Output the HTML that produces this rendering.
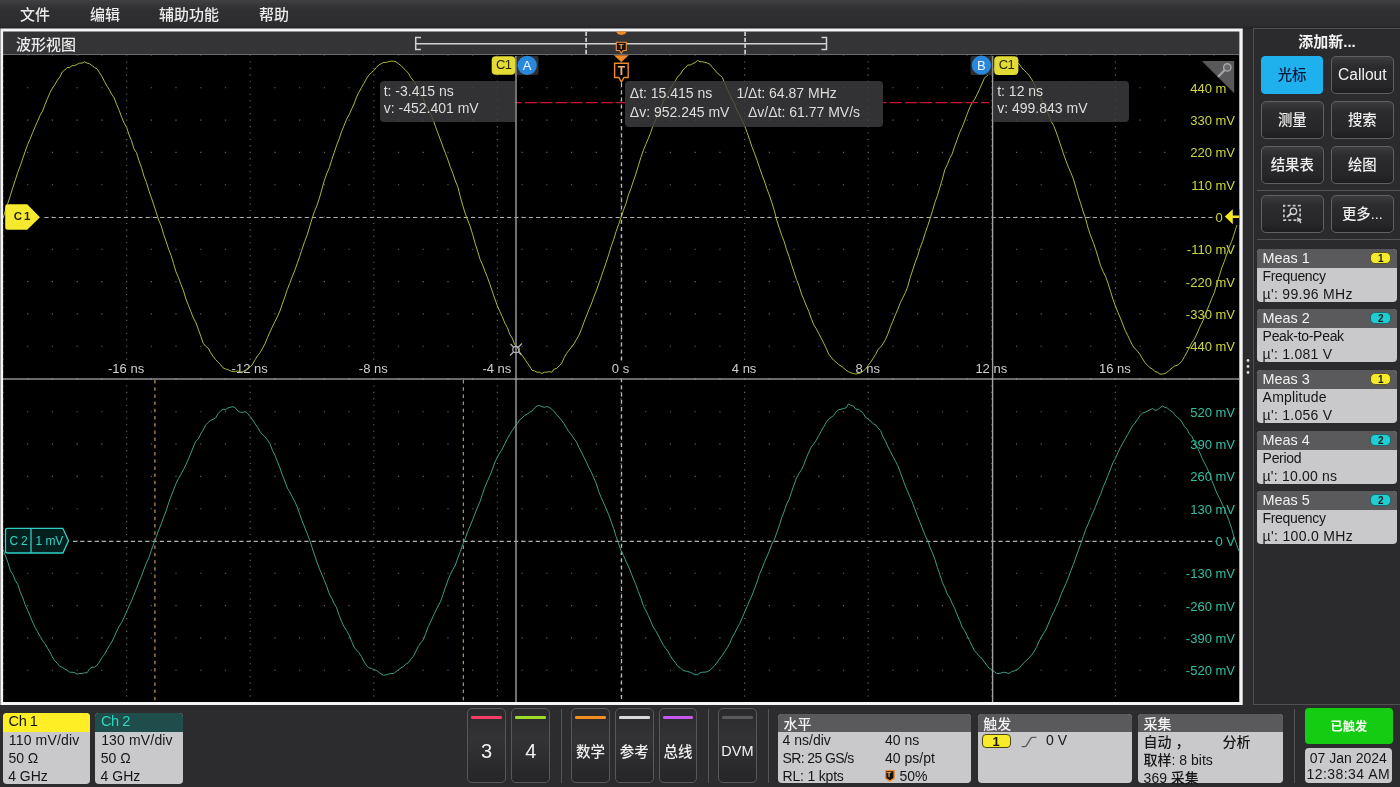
<!DOCTYPE html>
<html lang="zh-CN"><head><meta charset="utf-8"><title>波形视图</title>
<style>
*{box-sizing:border-box;margin:0;padding:0}
html,body{width:1400px;height:787px;overflow:hidden;background:#2c2c2e}
#root{position:absolute;left:0;top:0;width:1400px;height:787px;overflow:hidden;will-change:transform;transform:translateZ(0)}
body{position:relative;font-family:"Liberation Sans","Noto Sans CJK SC",sans-serif;color:#e6e6e6;font-size:14px;line-height:1;font-weight:500}
.abs{position:absolute}
.t{position:absolute;white-space:pre;line-height:1}
#menubar{position:absolute;left:0;top:0;width:1400px;height:29px;background:linear-gradient(#414143 0%,#363638 18%,#2f2f31 36%,#2d2d2f 88%,#202022 100%)}
#menubar span{position:absolute;top:7px;font-size:15px;color:#ececec;white-space:pre}
#frame{position:absolute;left:1px;top:29px;width:1241px;height:675px;background:#000}
#titlebar{position:absolute;left:3px;top:31px;width:1236px;height:24px;background:#343436;border-bottom:1px solid #6a6a6c}
#gsvg{position:absolute;left:0;top:0}
#rpanel{position:absolute;left:1253px;top:28px;width:150px;height:677px;border:1px solid #505052;background:#2b2b2d}
.btn{position:absolute;width:62.6px;height:38px;border:1px solid #606062;border-radius:5px;background:linear-gradient(#3c3c3e,#2c2c2e 25%,#262628 80%,#1e1e20);color:#f0f0f0;font-size:14.4px;text-align:center;line-height:36px;white-space:pre}
.btn.on{background:#1fb0ee;border-color:#1fb0ee;color:#081838;border-radius:4px;width:62.2px}
.hsep{position:absolute;height:1px;background:#555557}
.vsep{position:absolute;width:1px;background:#555557}
.badge{position:absolute;border-radius:4px;background:#c9c9cb;overflow:hidden;color:#1a1a1a;font-size:14px}
.badge .hd{position:absolute;left:0;top:0;right:0;background:#5a5a5c;color:#f0f0f0}
.badge .t{color:#161616}
.badge .hd .t{color:#f2f2f2}
.bbtn{position:absolute;top:708px;width:38.6px;height:75.4px;border:1px solid #58585a;border-radius:5px;background:linear-gradient(#2a2a2c,#333335 40%,#262628);color:#f0f0f0;text-align:center}
.bbtn i{position:absolute;left:3px;right:3px;top:7px;height:3px;border-radius:1.2px}
.bbtn span{position:absolute;left:0;right:0;top:33px;font-size:15px;white-space:pre}
.ro{position:absolute;background:rgba(62,61,64,.8);color:#dcdcdc;font-size:14px}
.ro .t{color:#dedede}
.ylab{position:absolute;right:165px;font-size:13px;white-space:pre;text-align:right}
.xlab{position:absolute;font-size:13px;color:#cfcfcf;white-space:pre;top:362px}
.xlab span{background:#000;padding:0 1px}
</style></head><body><div id="root">
<div id="menubar"><span style="left:20px">文件</span><span style="left:90px">编辑</span><span style="left:159px">辅助功能</span><span style="left:259px">帮助</span></div>
<div id="frame"></div><div id="titlebar"></div>
<div class="t" style="left:16px;top:37px;font-size:15px;color:#ececec">波形视图</div>
<svg id="gsvg" width="1400" height="787" viewBox="0 0 1400 787"><path d="M.4 28.4H1242.7V705.1H.4zM3.1 31.5V702.1H1239.3V31.5z" fill="#f4f4f4" fill-rule="evenodd"/><defs><clipPath id="cg"><rect x="3" y="55.5" width="1236" height="646.5"/></clipPath><clipPath id="cred"><rect x="514.5" y="100" width="110.6" height="6"/><rect x="883.2" y="100" width="107" height="6"/></clipPath><clipPath id="c1"><rect x="3" y="55.5" width="1236" height="323"/></clipPath><clipPath id="c2"><rect x="3" y="379" width="1236" height="323"/></clipPath></defs><path d="M2.4 55.5h1.2M27.1 55.5h1.2M51.8 55.5h1.2M76.6 55.5h1.2M101.3 55.5h1.2M126.0 55.5h1.2M150.7 55.5h1.2M175.4 55.5h1.2M200.2 55.5h1.2M224.9 55.5h1.2M249.6 55.5h1.2M274.3 55.5h1.2M299.0 55.5h1.2M323.8 55.5h1.2M348.5 55.5h1.2M373.2 55.5h1.2M397.9 55.5h1.2M422.6 55.5h1.2M447.4 55.5h1.2M472.1 55.5h1.2M496.8 55.5h1.2M521.5 55.5h1.2M546.2 55.5h1.2M571.0 55.5h1.2M595.7 55.5h1.2M620.4 55.5h1.2M645.1 55.5h1.2M669.8 55.5h1.2M694.6 55.5h1.2M719.3 55.5h1.2M744.0 55.5h1.2M768.7 55.5h1.2M793.4 55.5h1.2M818.2 55.5h1.2M842.9 55.5h1.2M867.6 55.5h1.2M892.3 55.5h1.2M917.0 55.5h1.2M941.8 55.5h1.2M966.5 55.5h1.2M991.2 55.5h1.2M1015.9 55.5h1.2M1040.6 55.5h1.2M1065.4 55.5h1.2M1090.1 55.5h1.2M1114.8 55.5h1.2M1139.5 55.5h1.2M1164.2 55.5h1.2M1189.0 55.5h1.2M1213.7 55.5h1.2M1238.4 55.5h1.2M2.4 87.8h1.2M27.1 87.8h1.2M51.8 87.8h1.2M76.6 87.8h1.2M101.3 87.8h1.2M126.0 87.8h1.2M150.7 87.8h1.2M175.4 87.8h1.2M200.2 87.8h1.2M224.9 87.8h1.2M249.6 87.8h1.2M274.3 87.8h1.2M299.0 87.8h1.2M323.8 87.8h1.2M348.5 87.8h1.2M373.2 87.8h1.2M397.9 87.8h1.2M422.6 87.8h1.2M447.4 87.8h1.2M472.1 87.8h1.2M496.8 87.8h1.2M521.5 87.8h1.2M546.2 87.8h1.2M571.0 87.8h1.2M595.7 87.8h1.2M620.4 87.8h1.2M645.1 87.8h1.2M669.8 87.8h1.2M694.6 87.8h1.2M719.3 87.8h1.2M744.0 87.8h1.2M768.7 87.8h1.2M793.4 87.8h1.2M818.2 87.8h1.2M842.9 87.8h1.2M867.6 87.8h1.2M892.3 87.8h1.2M917.0 87.8h1.2M941.8 87.8h1.2M966.5 87.8h1.2M991.2 87.8h1.2M1015.9 87.8h1.2M1040.6 87.8h1.2M1065.4 87.8h1.2M1090.1 87.8h1.2M1114.8 87.8h1.2M1139.5 87.8h1.2M1164.2 87.8h1.2M2.4 120.1h1.2M27.1 120.1h1.2M51.8 120.1h1.2M76.6 120.1h1.2M101.3 120.1h1.2M126.0 120.1h1.2M150.7 120.1h1.2M175.4 120.1h1.2M200.2 120.1h1.2M224.9 120.1h1.2M249.6 120.1h1.2M274.3 120.1h1.2M299.0 120.1h1.2M323.8 120.1h1.2M348.5 120.1h1.2M373.2 120.1h1.2M397.9 120.1h1.2M422.6 120.1h1.2M447.4 120.1h1.2M472.1 120.1h1.2M496.8 120.1h1.2M521.5 120.1h1.2M546.2 120.1h1.2M571.0 120.1h1.2M595.7 120.1h1.2M620.4 120.1h1.2M645.1 120.1h1.2M669.8 120.1h1.2M694.6 120.1h1.2M719.3 120.1h1.2M744.0 120.1h1.2M768.7 120.1h1.2M793.4 120.1h1.2M818.2 120.1h1.2M842.9 120.1h1.2M867.6 120.1h1.2M892.3 120.1h1.2M917.0 120.1h1.2M941.8 120.1h1.2M966.5 120.1h1.2M991.2 120.1h1.2M1015.9 120.1h1.2M1040.6 120.1h1.2M1065.4 120.1h1.2M1090.1 120.1h1.2M1114.8 120.1h1.2M1139.5 120.1h1.2M1164.2 120.1h1.2M2.4 152.4h1.2M27.1 152.4h1.2M51.8 152.4h1.2M76.6 152.4h1.2M101.3 152.4h1.2M126.0 152.4h1.2M150.7 152.4h1.2M175.4 152.4h1.2M200.2 152.4h1.2M224.9 152.4h1.2M249.6 152.4h1.2M274.3 152.4h1.2M299.0 152.4h1.2M323.8 152.4h1.2M348.5 152.4h1.2M373.2 152.4h1.2M397.9 152.4h1.2M422.6 152.4h1.2M447.4 152.4h1.2M472.1 152.4h1.2M496.8 152.4h1.2M521.5 152.4h1.2M546.2 152.4h1.2M571.0 152.4h1.2M595.7 152.4h1.2M620.4 152.4h1.2M645.1 152.4h1.2M669.8 152.4h1.2M694.6 152.4h1.2M719.3 152.4h1.2M744.0 152.4h1.2M768.7 152.4h1.2M793.4 152.4h1.2M818.2 152.4h1.2M842.9 152.4h1.2M867.6 152.4h1.2M892.3 152.4h1.2M917.0 152.4h1.2M941.8 152.4h1.2M966.5 152.4h1.2M991.2 152.4h1.2M1015.9 152.4h1.2M1040.6 152.4h1.2M1065.4 152.4h1.2M1090.1 152.4h1.2M1114.8 152.4h1.2M1139.5 152.4h1.2M1164.2 152.4h1.2M2.4 184.7h1.2M27.1 184.7h1.2M51.8 184.7h1.2M76.6 184.7h1.2M101.3 184.7h1.2M126.0 184.7h1.2M150.7 184.7h1.2M175.4 184.7h1.2M200.2 184.7h1.2M224.9 184.7h1.2M249.6 184.7h1.2M274.3 184.7h1.2M299.0 184.7h1.2M323.8 184.7h1.2M348.5 184.7h1.2M373.2 184.7h1.2M397.9 184.7h1.2M422.6 184.7h1.2M447.4 184.7h1.2M472.1 184.7h1.2M496.8 184.7h1.2M521.5 184.7h1.2M546.2 184.7h1.2M571.0 184.7h1.2M595.7 184.7h1.2M620.4 184.7h1.2M645.1 184.7h1.2M669.8 184.7h1.2M694.6 184.7h1.2M719.3 184.7h1.2M744.0 184.7h1.2M768.7 184.7h1.2M793.4 184.7h1.2M818.2 184.7h1.2M842.9 184.7h1.2M867.6 184.7h1.2M892.3 184.7h1.2M917.0 184.7h1.2M941.8 184.7h1.2M966.5 184.7h1.2M991.2 184.7h1.2M1015.9 184.7h1.2M1040.6 184.7h1.2M1065.4 184.7h1.2M1090.1 184.7h1.2M1114.8 184.7h1.2M1139.5 184.7h1.2M1164.2 184.7h1.2M2.4 217.0h1.2M27.1 217.0h1.2M51.8 217.0h1.2M76.6 217.0h1.2M101.3 217.0h1.2M126.0 217.0h1.2M150.7 217.0h1.2M175.4 217.0h1.2M200.2 217.0h1.2M224.9 217.0h1.2M249.6 217.0h1.2M274.3 217.0h1.2M299.0 217.0h1.2M323.8 217.0h1.2M348.5 217.0h1.2M373.2 217.0h1.2M397.9 217.0h1.2M422.6 217.0h1.2M447.4 217.0h1.2M472.1 217.0h1.2M496.8 217.0h1.2M521.5 217.0h1.2M546.2 217.0h1.2M571.0 217.0h1.2M595.7 217.0h1.2M620.4 217.0h1.2M645.1 217.0h1.2M669.8 217.0h1.2M694.6 217.0h1.2M719.3 217.0h1.2M744.0 217.0h1.2M768.7 217.0h1.2M793.4 217.0h1.2M818.2 217.0h1.2M842.9 217.0h1.2M867.6 217.0h1.2M892.3 217.0h1.2M917.0 217.0h1.2M941.8 217.0h1.2M966.5 217.0h1.2M991.2 217.0h1.2M1015.9 217.0h1.2M1040.6 217.0h1.2M1065.4 217.0h1.2M1090.1 217.0h1.2M1114.8 217.0h1.2M1139.5 217.0h1.2M1164.2 217.0h1.2M2.4 249.3h1.2M27.1 249.3h1.2M51.8 249.3h1.2M76.6 249.3h1.2M101.3 249.3h1.2M126.0 249.3h1.2M150.7 249.3h1.2M175.4 249.3h1.2M200.2 249.3h1.2M224.9 249.3h1.2M249.6 249.3h1.2M274.3 249.3h1.2M299.0 249.3h1.2M323.8 249.3h1.2M348.5 249.3h1.2M373.2 249.3h1.2M397.9 249.3h1.2M422.6 249.3h1.2M447.4 249.3h1.2M472.1 249.3h1.2M496.8 249.3h1.2M521.5 249.3h1.2M546.2 249.3h1.2M571.0 249.3h1.2M595.7 249.3h1.2M620.4 249.3h1.2M645.1 249.3h1.2M669.8 249.3h1.2M694.6 249.3h1.2M719.3 249.3h1.2M744.0 249.3h1.2M768.7 249.3h1.2M793.4 249.3h1.2M818.2 249.3h1.2M842.9 249.3h1.2M867.6 249.3h1.2M892.3 249.3h1.2M917.0 249.3h1.2M941.8 249.3h1.2M966.5 249.3h1.2M991.2 249.3h1.2M1015.9 249.3h1.2M1040.6 249.3h1.2M1065.4 249.3h1.2M1090.1 249.3h1.2M1114.8 249.3h1.2M1139.5 249.3h1.2M1164.2 249.3h1.2M2.4 281.6h1.2M27.1 281.6h1.2M51.8 281.6h1.2M76.6 281.6h1.2M101.3 281.6h1.2M126.0 281.6h1.2M150.7 281.6h1.2M175.4 281.6h1.2M200.2 281.6h1.2M224.9 281.6h1.2M249.6 281.6h1.2M274.3 281.6h1.2M299.0 281.6h1.2M323.8 281.6h1.2M348.5 281.6h1.2M373.2 281.6h1.2M397.9 281.6h1.2M422.6 281.6h1.2M447.4 281.6h1.2M472.1 281.6h1.2M496.8 281.6h1.2M521.5 281.6h1.2M546.2 281.6h1.2M571.0 281.6h1.2M595.7 281.6h1.2M620.4 281.6h1.2M645.1 281.6h1.2M669.8 281.6h1.2M694.6 281.6h1.2M719.3 281.6h1.2M744.0 281.6h1.2M768.7 281.6h1.2M793.4 281.6h1.2M818.2 281.6h1.2M842.9 281.6h1.2M867.6 281.6h1.2M892.3 281.6h1.2M917.0 281.6h1.2M941.8 281.6h1.2M966.5 281.6h1.2M991.2 281.6h1.2M1015.9 281.6h1.2M1040.6 281.6h1.2M1065.4 281.6h1.2M1090.1 281.6h1.2M1114.8 281.6h1.2M1139.5 281.6h1.2M1164.2 281.6h1.2M2.4 313.9h1.2M27.1 313.9h1.2M51.8 313.9h1.2M76.6 313.9h1.2M101.3 313.9h1.2M126.0 313.9h1.2M150.7 313.9h1.2M175.4 313.9h1.2M200.2 313.9h1.2M224.9 313.9h1.2M249.6 313.9h1.2M274.3 313.9h1.2M299.0 313.9h1.2M323.8 313.9h1.2M348.5 313.9h1.2M373.2 313.9h1.2M397.9 313.9h1.2M422.6 313.9h1.2M447.4 313.9h1.2M472.1 313.9h1.2M496.8 313.9h1.2M521.5 313.9h1.2M546.2 313.9h1.2M571.0 313.9h1.2M595.7 313.9h1.2M620.4 313.9h1.2M645.1 313.9h1.2M669.8 313.9h1.2M694.6 313.9h1.2M719.3 313.9h1.2M744.0 313.9h1.2M768.7 313.9h1.2M793.4 313.9h1.2M818.2 313.9h1.2M842.9 313.9h1.2M867.6 313.9h1.2M892.3 313.9h1.2M917.0 313.9h1.2M941.8 313.9h1.2M966.5 313.9h1.2M991.2 313.9h1.2M1015.9 313.9h1.2M1040.6 313.9h1.2M1065.4 313.9h1.2M1090.1 313.9h1.2M1114.8 313.9h1.2M1139.5 313.9h1.2M1164.2 313.9h1.2M2.4 346.2h1.2M27.1 346.2h1.2M51.8 346.2h1.2M76.6 346.2h1.2M101.3 346.2h1.2M126.0 346.2h1.2M150.7 346.2h1.2M175.4 346.2h1.2M200.2 346.2h1.2M224.9 346.2h1.2M249.6 346.2h1.2M274.3 346.2h1.2M299.0 346.2h1.2M323.8 346.2h1.2M348.5 346.2h1.2M373.2 346.2h1.2M397.9 346.2h1.2M422.6 346.2h1.2M447.4 346.2h1.2M472.1 346.2h1.2M496.8 346.2h1.2M521.5 346.2h1.2M546.2 346.2h1.2M571.0 346.2h1.2M595.7 346.2h1.2M620.4 346.2h1.2M645.1 346.2h1.2M669.8 346.2h1.2M694.6 346.2h1.2M719.3 346.2h1.2M744.0 346.2h1.2M768.7 346.2h1.2M793.4 346.2h1.2M818.2 346.2h1.2M842.9 346.2h1.2M867.6 346.2h1.2M892.3 346.2h1.2M917.0 346.2h1.2M941.8 346.2h1.2M966.5 346.2h1.2M991.2 346.2h1.2M1015.9 346.2h1.2M1040.6 346.2h1.2M1065.4 346.2h1.2M1090.1 346.2h1.2M1114.8 346.2h1.2M1139.5 346.2h1.2M1164.2 346.2h1.2M2.4 378.5h1.2M27.1 378.5h1.2M51.8 378.5h1.2M76.6 378.5h1.2M101.3 378.5h1.2M126.0 378.5h1.2M150.7 378.5h1.2M175.4 378.5h1.2M200.2 378.5h1.2M224.9 378.5h1.2M249.6 378.5h1.2M274.3 378.5h1.2M299.0 378.5h1.2M323.8 378.5h1.2M348.5 378.5h1.2M373.2 378.5h1.2M397.9 378.5h1.2M422.6 378.5h1.2M447.4 378.5h1.2M472.1 378.5h1.2M496.8 378.5h1.2M521.5 378.5h1.2M546.2 378.5h1.2M571.0 378.5h1.2M595.7 378.5h1.2M620.4 378.5h1.2M645.1 378.5h1.2M669.8 378.5h1.2M694.6 378.5h1.2M719.3 378.5h1.2M744.0 378.5h1.2M768.7 378.5h1.2M793.4 378.5h1.2M818.2 378.5h1.2M842.9 378.5h1.2M867.6 378.5h1.2M892.3 378.5h1.2M917.0 378.5h1.2M941.8 378.5h1.2M966.5 378.5h1.2M991.2 378.5h1.2M1015.9 378.5h1.2M1040.6 378.5h1.2M1065.4 378.5h1.2M1090.1 378.5h1.2M1114.8 378.5h1.2M1139.5 378.5h1.2M1164.2 378.5h1.2M1189.0 378.5h1.2M1213.7 378.5h1.2M1238.4 378.5h1.2M2.4 62.0h1.2M2.4 68.4h1.2M2.4 74.9h1.2M2.4 81.3h1.2M2.4 94.3h1.2M2.4 100.7h1.2M2.4 107.2h1.2M2.4 113.6h1.2M2.4 126.6h1.2M2.4 133.0h1.2M2.4 139.5h1.2M2.4 145.9h1.2M2.4 158.9h1.2M2.4 165.3h1.2M2.4 171.8h1.2M2.4 178.2h1.2M2.4 191.2h1.2M2.4 197.6h1.2M2.4 204.1h1.2M2.4 210.5h1.2M2.4 223.5h1.2M2.4 229.9h1.2M2.4 236.4h1.2M2.4 242.8h1.2M2.4 255.8h1.2M2.4 262.2h1.2M2.4 268.7h1.2M2.4 275.1h1.2M2.4 288.1h1.2M2.4 294.5h1.2M2.4 301.0h1.2M2.4 307.4h1.2M2.4 320.4h1.2M2.4 326.8h1.2M2.4 333.3h1.2M2.4 339.7h1.2M2.4 352.7h1.2M2.4 359.1h1.2M2.4 365.6h1.2M2.4 372.0h1.2M126.0 62.0h1.2M126.0 68.4h1.2M126.0 74.9h1.2M126.0 81.3h1.2M126.0 94.3h1.2M126.0 100.7h1.2M126.0 107.2h1.2M126.0 113.6h1.2M126.0 126.6h1.2M126.0 133.0h1.2M126.0 139.5h1.2M126.0 145.9h1.2M126.0 158.9h1.2M126.0 165.3h1.2M126.0 171.8h1.2M126.0 178.2h1.2M126.0 191.2h1.2M126.0 197.6h1.2M126.0 204.1h1.2M126.0 210.5h1.2M126.0 223.5h1.2M126.0 229.9h1.2M126.0 236.4h1.2M126.0 242.8h1.2M126.0 255.8h1.2M126.0 262.2h1.2M126.0 268.7h1.2M126.0 275.1h1.2M126.0 288.1h1.2M126.0 294.5h1.2M126.0 301.0h1.2M126.0 307.4h1.2M126.0 320.4h1.2M126.0 326.8h1.2M126.0 333.3h1.2M126.0 339.7h1.2M126.0 352.7h1.2M126.0 359.1h1.2M126.0 365.6h1.2M126.0 372.0h1.2M249.6 62.0h1.2M249.6 68.4h1.2M249.6 74.9h1.2M249.6 81.3h1.2M249.6 94.3h1.2M249.6 100.7h1.2M249.6 107.2h1.2M249.6 113.6h1.2M249.6 126.6h1.2M249.6 133.0h1.2M249.6 139.5h1.2M249.6 145.9h1.2M249.6 158.9h1.2M249.6 165.3h1.2M249.6 171.8h1.2M249.6 178.2h1.2M249.6 191.2h1.2M249.6 197.6h1.2M249.6 204.1h1.2M249.6 210.5h1.2M249.6 223.5h1.2M249.6 229.9h1.2M249.6 236.4h1.2M249.6 242.8h1.2M249.6 255.8h1.2M249.6 262.2h1.2M249.6 268.7h1.2M249.6 275.1h1.2M249.6 288.1h1.2M249.6 294.5h1.2M249.6 301.0h1.2M249.6 307.4h1.2M249.6 320.4h1.2M249.6 326.8h1.2M249.6 333.3h1.2M249.6 339.7h1.2M249.6 352.7h1.2M249.6 359.1h1.2M249.6 365.6h1.2M249.6 372.0h1.2M373.2 62.0h1.2M373.2 68.4h1.2M373.2 74.9h1.2M373.2 81.3h1.2M373.2 94.3h1.2M373.2 100.7h1.2M373.2 107.2h1.2M373.2 113.6h1.2M373.2 126.6h1.2M373.2 133.0h1.2M373.2 139.5h1.2M373.2 145.9h1.2M373.2 158.9h1.2M373.2 165.3h1.2M373.2 171.8h1.2M373.2 178.2h1.2M373.2 191.2h1.2M373.2 197.6h1.2M373.2 204.1h1.2M373.2 210.5h1.2M373.2 223.5h1.2M373.2 229.9h1.2M373.2 236.4h1.2M373.2 242.8h1.2M373.2 255.8h1.2M373.2 262.2h1.2M373.2 268.7h1.2M373.2 275.1h1.2M373.2 288.1h1.2M373.2 294.5h1.2M373.2 301.0h1.2M373.2 307.4h1.2M373.2 320.4h1.2M373.2 326.8h1.2M373.2 333.3h1.2M373.2 339.7h1.2M373.2 352.7h1.2M373.2 359.1h1.2M373.2 365.6h1.2M373.2 372.0h1.2M496.8 62.0h1.2M496.8 68.4h1.2M496.8 74.9h1.2M496.8 81.3h1.2M496.8 94.3h1.2M496.8 100.7h1.2M496.8 107.2h1.2M496.8 113.6h1.2M496.8 126.6h1.2M496.8 133.0h1.2M496.8 139.5h1.2M496.8 145.9h1.2M496.8 158.9h1.2M496.8 165.3h1.2M496.8 171.8h1.2M496.8 178.2h1.2M496.8 191.2h1.2M496.8 197.6h1.2M496.8 204.1h1.2M496.8 210.5h1.2M496.8 223.5h1.2M496.8 229.9h1.2M496.8 236.4h1.2M496.8 242.8h1.2M496.8 255.8h1.2M496.8 262.2h1.2M496.8 268.7h1.2M496.8 275.1h1.2M496.8 288.1h1.2M496.8 294.5h1.2M496.8 301.0h1.2M496.8 307.4h1.2M496.8 320.4h1.2M496.8 326.8h1.2M496.8 333.3h1.2M496.8 339.7h1.2M496.8 352.7h1.2M496.8 359.1h1.2M496.8 365.6h1.2M496.8 372.0h1.2M620.4 62.0h1.2M620.4 68.4h1.2M620.4 74.9h1.2M620.4 81.3h1.2M620.4 94.3h1.2M620.4 100.7h1.2M620.4 107.2h1.2M620.4 113.6h1.2M620.4 126.6h1.2M620.4 133.0h1.2M620.4 139.5h1.2M620.4 145.9h1.2M620.4 158.9h1.2M620.4 165.3h1.2M620.4 171.8h1.2M620.4 178.2h1.2M620.4 191.2h1.2M620.4 197.6h1.2M620.4 204.1h1.2M620.4 210.5h1.2M620.4 223.5h1.2M620.4 229.9h1.2M620.4 236.4h1.2M620.4 242.8h1.2M620.4 255.8h1.2M620.4 262.2h1.2M620.4 268.7h1.2M620.4 275.1h1.2M620.4 288.1h1.2M620.4 294.5h1.2M620.4 301.0h1.2M620.4 307.4h1.2M620.4 320.4h1.2M620.4 326.8h1.2M620.4 333.3h1.2M620.4 339.7h1.2M620.4 352.7h1.2M620.4 359.1h1.2M620.4 365.6h1.2M620.4 372.0h1.2M744.0 62.0h1.2M744.0 68.4h1.2M744.0 74.9h1.2M744.0 81.3h1.2M744.0 94.3h1.2M744.0 100.7h1.2M744.0 107.2h1.2M744.0 113.6h1.2M744.0 126.6h1.2M744.0 133.0h1.2M744.0 139.5h1.2M744.0 145.9h1.2M744.0 158.9h1.2M744.0 165.3h1.2M744.0 171.8h1.2M744.0 178.2h1.2M744.0 191.2h1.2M744.0 197.6h1.2M744.0 204.1h1.2M744.0 210.5h1.2M744.0 223.5h1.2M744.0 229.9h1.2M744.0 236.4h1.2M744.0 242.8h1.2M744.0 255.8h1.2M744.0 262.2h1.2M744.0 268.7h1.2M744.0 275.1h1.2M744.0 288.1h1.2M744.0 294.5h1.2M744.0 301.0h1.2M744.0 307.4h1.2M744.0 320.4h1.2M744.0 326.8h1.2M744.0 333.3h1.2M744.0 339.7h1.2M744.0 352.7h1.2M744.0 359.1h1.2M744.0 365.6h1.2M744.0 372.0h1.2M867.6 62.0h1.2M867.6 68.4h1.2M867.6 74.9h1.2M867.6 81.3h1.2M867.6 94.3h1.2M867.6 100.7h1.2M867.6 107.2h1.2M867.6 113.6h1.2M867.6 126.6h1.2M867.6 133.0h1.2M867.6 139.5h1.2M867.6 145.9h1.2M867.6 158.9h1.2M867.6 165.3h1.2M867.6 171.8h1.2M867.6 178.2h1.2M867.6 191.2h1.2M867.6 197.6h1.2M867.6 204.1h1.2M867.6 210.5h1.2M867.6 223.5h1.2M867.6 229.9h1.2M867.6 236.4h1.2M867.6 242.8h1.2M867.6 255.8h1.2M867.6 262.2h1.2M867.6 268.7h1.2M867.6 275.1h1.2M867.6 288.1h1.2M867.6 294.5h1.2M867.6 301.0h1.2M867.6 307.4h1.2M867.6 320.4h1.2M867.6 326.8h1.2M867.6 333.3h1.2M867.6 339.7h1.2M867.6 352.7h1.2M867.6 359.1h1.2M867.6 365.6h1.2M867.6 372.0h1.2M991.2 62.0h1.2M991.2 68.4h1.2M991.2 74.9h1.2M991.2 81.3h1.2M991.2 94.3h1.2M991.2 100.7h1.2M991.2 107.2h1.2M991.2 113.6h1.2M991.2 126.6h1.2M991.2 133.0h1.2M991.2 139.5h1.2M991.2 145.9h1.2M991.2 158.9h1.2M991.2 165.3h1.2M991.2 171.8h1.2M991.2 178.2h1.2M991.2 191.2h1.2M991.2 197.6h1.2M991.2 204.1h1.2M991.2 210.5h1.2M991.2 223.5h1.2M991.2 229.9h1.2M991.2 236.4h1.2M991.2 242.8h1.2M991.2 255.8h1.2M991.2 262.2h1.2M991.2 268.7h1.2M991.2 275.1h1.2M991.2 288.1h1.2M991.2 294.5h1.2M991.2 301.0h1.2M991.2 307.4h1.2M991.2 320.4h1.2M991.2 326.8h1.2M991.2 333.3h1.2M991.2 339.7h1.2M991.2 352.7h1.2M991.2 359.1h1.2M991.2 365.6h1.2M991.2 372.0h1.2M1114.8 62.0h1.2M1114.8 68.4h1.2M1114.8 74.9h1.2M1114.8 81.3h1.2M1114.8 94.3h1.2M1114.8 100.7h1.2M1114.8 107.2h1.2M1114.8 113.6h1.2M1114.8 126.6h1.2M1114.8 133.0h1.2M1114.8 139.5h1.2M1114.8 145.9h1.2M1114.8 158.9h1.2M1114.8 165.3h1.2M1114.8 171.8h1.2M1114.8 178.2h1.2M1114.8 191.2h1.2M1114.8 197.6h1.2M1114.8 204.1h1.2M1114.8 210.5h1.2M1114.8 223.5h1.2M1114.8 229.9h1.2M1114.8 236.4h1.2M1114.8 242.8h1.2M1114.8 255.8h1.2M1114.8 262.2h1.2M1114.8 268.7h1.2M1114.8 275.1h1.2M1114.8 288.1h1.2M1114.8 294.5h1.2M1114.8 301.0h1.2M1114.8 307.4h1.2M1114.8 320.4h1.2M1114.8 326.8h1.2M1114.8 333.3h1.2M1114.8 339.7h1.2M1114.8 352.7h1.2M1114.8 359.1h1.2M1114.8 365.6h1.2M1114.8 372.0h1.2M2.4 379.5h1.2M27.1 379.5h1.2M51.8 379.5h1.2M76.6 379.5h1.2M101.3 379.5h1.2M126.0 379.5h1.2M150.7 379.5h1.2M175.4 379.5h1.2M200.2 379.5h1.2M224.9 379.5h1.2M249.6 379.5h1.2M274.3 379.5h1.2M299.0 379.5h1.2M323.8 379.5h1.2M348.5 379.5h1.2M373.2 379.5h1.2M397.9 379.5h1.2M422.6 379.5h1.2M447.4 379.5h1.2M472.1 379.5h1.2M496.8 379.5h1.2M521.5 379.5h1.2M546.2 379.5h1.2M571.0 379.5h1.2M595.7 379.5h1.2M620.4 379.5h1.2M645.1 379.5h1.2M669.8 379.5h1.2M694.6 379.5h1.2M719.3 379.5h1.2M744.0 379.5h1.2M768.7 379.5h1.2M793.4 379.5h1.2M818.2 379.5h1.2M842.9 379.5h1.2M867.6 379.5h1.2M892.3 379.5h1.2M917.0 379.5h1.2M941.8 379.5h1.2M966.5 379.5h1.2M991.2 379.5h1.2M1015.9 379.5h1.2M1040.6 379.5h1.2M1065.4 379.5h1.2M1090.1 379.5h1.2M1114.8 379.5h1.2M1139.5 379.5h1.2M1164.2 379.5h1.2M1189.0 379.5h1.2M1213.7 379.5h1.2M1238.4 379.5h1.2M2.4 411.8h1.2M27.1 411.8h1.2M51.8 411.8h1.2M76.6 411.8h1.2M101.3 411.8h1.2M126.0 411.8h1.2M150.7 411.8h1.2M175.4 411.8h1.2M200.2 411.8h1.2M224.9 411.8h1.2M249.6 411.8h1.2M274.3 411.8h1.2M299.0 411.8h1.2M323.8 411.8h1.2M348.5 411.8h1.2M373.2 411.8h1.2M397.9 411.8h1.2M422.6 411.8h1.2M447.4 411.8h1.2M472.1 411.8h1.2M496.8 411.8h1.2M521.5 411.8h1.2M546.2 411.8h1.2M571.0 411.8h1.2M595.7 411.8h1.2M620.4 411.8h1.2M645.1 411.8h1.2M669.8 411.8h1.2M694.6 411.8h1.2M719.3 411.8h1.2M744.0 411.8h1.2M768.7 411.8h1.2M793.4 411.8h1.2M818.2 411.8h1.2M842.9 411.8h1.2M867.6 411.8h1.2M892.3 411.8h1.2M917.0 411.8h1.2M941.8 411.8h1.2M966.5 411.8h1.2M991.2 411.8h1.2M1015.9 411.8h1.2M1040.6 411.8h1.2M1065.4 411.8h1.2M1090.1 411.8h1.2M1114.8 411.8h1.2M1139.5 411.8h1.2M1164.2 411.8h1.2M2.4 444.1h1.2M27.1 444.1h1.2M51.8 444.1h1.2M76.6 444.1h1.2M101.3 444.1h1.2M126.0 444.1h1.2M150.7 444.1h1.2M175.4 444.1h1.2M200.2 444.1h1.2M224.9 444.1h1.2M249.6 444.1h1.2M274.3 444.1h1.2M299.0 444.1h1.2M323.8 444.1h1.2M348.5 444.1h1.2M373.2 444.1h1.2M397.9 444.1h1.2M422.6 444.1h1.2M447.4 444.1h1.2M472.1 444.1h1.2M496.8 444.1h1.2M521.5 444.1h1.2M546.2 444.1h1.2M571.0 444.1h1.2M595.7 444.1h1.2M620.4 444.1h1.2M645.1 444.1h1.2M669.8 444.1h1.2M694.6 444.1h1.2M719.3 444.1h1.2M744.0 444.1h1.2M768.7 444.1h1.2M793.4 444.1h1.2M818.2 444.1h1.2M842.9 444.1h1.2M867.6 444.1h1.2M892.3 444.1h1.2M917.0 444.1h1.2M941.8 444.1h1.2M966.5 444.1h1.2M991.2 444.1h1.2M1015.9 444.1h1.2M1040.6 444.1h1.2M1065.4 444.1h1.2M1090.1 444.1h1.2M1114.8 444.1h1.2M1139.5 444.1h1.2M1164.2 444.1h1.2M2.4 476.4h1.2M27.1 476.4h1.2M51.8 476.4h1.2M76.6 476.4h1.2M101.3 476.4h1.2M126.0 476.4h1.2M150.7 476.4h1.2M175.4 476.4h1.2M200.2 476.4h1.2M224.9 476.4h1.2M249.6 476.4h1.2M274.3 476.4h1.2M299.0 476.4h1.2M323.8 476.4h1.2M348.5 476.4h1.2M373.2 476.4h1.2M397.9 476.4h1.2M422.6 476.4h1.2M447.4 476.4h1.2M472.1 476.4h1.2M496.8 476.4h1.2M521.5 476.4h1.2M546.2 476.4h1.2M571.0 476.4h1.2M595.7 476.4h1.2M620.4 476.4h1.2M645.1 476.4h1.2M669.8 476.4h1.2M694.6 476.4h1.2M719.3 476.4h1.2M744.0 476.4h1.2M768.7 476.4h1.2M793.4 476.4h1.2M818.2 476.4h1.2M842.9 476.4h1.2M867.6 476.4h1.2M892.3 476.4h1.2M917.0 476.4h1.2M941.8 476.4h1.2M966.5 476.4h1.2M991.2 476.4h1.2M1015.9 476.4h1.2M1040.6 476.4h1.2M1065.4 476.4h1.2M1090.1 476.4h1.2M1114.8 476.4h1.2M1139.5 476.4h1.2M1164.2 476.4h1.2M2.4 508.7h1.2M27.1 508.7h1.2M51.8 508.7h1.2M76.6 508.7h1.2M101.3 508.7h1.2M126.0 508.7h1.2M150.7 508.7h1.2M175.4 508.7h1.2M200.2 508.7h1.2M224.9 508.7h1.2M249.6 508.7h1.2M274.3 508.7h1.2M299.0 508.7h1.2M323.8 508.7h1.2M348.5 508.7h1.2M373.2 508.7h1.2M397.9 508.7h1.2M422.6 508.7h1.2M447.4 508.7h1.2M472.1 508.7h1.2M496.8 508.7h1.2M521.5 508.7h1.2M546.2 508.7h1.2M571.0 508.7h1.2M595.7 508.7h1.2M620.4 508.7h1.2M645.1 508.7h1.2M669.8 508.7h1.2M694.6 508.7h1.2M719.3 508.7h1.2M744.0 508.7h1.2M768.7 508.7h1.2M793.4 508.7h1.2M818.2 508.7h1.2M842.9 508.7h1.2M867.6 508.7h1.2M892.3 508.7h1.2M917.0 508.7h1.2M941.8 508.7h1.2M966.5 508.7h1.2M991.2 508.7h1.2M1015.9 508.7h1.2M1040.6 508.7h1.2M1065.4 508.7h1.2M1090.1 508.7h1.2M1114.8 508.7h1.2M1139.5 508.7h1.2M1164.2 508.7h1.2M2.4 541.0h1.2M27.1 541.0h1.2M51.8 541.0h1.2M76.6 541.0h1.2M101.3 541.0h1.2M126.0 541.0h1.2M150.7 541.0h1.2M175.4 541.0h1.2M200.2 541.0h1.2M224.9 541.0h1.2M249.6 541.0h1.2M274.3 541.0h1.2M299.0 541.0h1.2M323.8 541.0h1.2M348.5 541.0h1.2M373.2 541.0h1.2M397.9 541.0h1.2M422.6 541.0h1.2M447.4 541.0h1.2M472.1 541.0h1.2M496.8 541.0h1.2M521.5 541.0h1.2M546.2 541.0h1.2M571.0 541.0h1.2M595.7 541.0h1.2M620.4 541.0h1.2M645.1 541.0h1.2M669.8 541.0h1.2M694.6 541.0h1.2M719.3 541.0h1.2M744.0 541.0h1.2M768.7 541.0h1.2M793.4 541.0h1.2M818.2 541.0h1.2M842.9 541.0h1.2M867.6 541.0h1.2M892.3 541.0h1.2M917.0 541.0h1.2M941.8 541.0h1.2M966.5 541.0h1.2M991.2 541.0h1.2M1015.9 541.0h1.2M1040.6 541.0h1.2M1065.4 541.0h1.2M1090.1 541.0h1.2M1114.8 541.0h1.2M1139.5 541.0h1.2M1164.2 541.0h1.2M2.4 573.3h1.2M27.1 573.3h1.2M51.8 573.3h1.2M76.6 573.3h1.2M101.3 573.3h1.2M126.0 573.3h1.2M150.7 573.3h1.2M175.4 573.3h1.2M200.2 573.3h1.2M224.9 573.3h1.2M249.6 573.3h1.2M274.3 573.3h1.2M299.0 573.3h1.2M323.8 573.3h1.2M348.5 573.3h1.2M373.2 573.3h1.2M397.9 573.3h1.2M422.6 573.3h1.2M447.4 573.3h1.2M472.1 573.3h1.2M496.8 573.3h1.2M521.5 573.3h1.2M546.2 573.3h1.2M571.0 573.3h1.2M595.7 573.3h1.2M620.4 573.3h1.2M645.1 573.3h1.2M669.8 573.3h1.2M694.6 573.3h1.2M719.3 573.3h1.2M744.0 573.3h1.2M768.7 573.3h1.2M793.4 573.3h1.2M818.2 573.3h1.2M842.9 573.3h1.2M867.6 573.3h1.2M892.3 573.3h1.2M917.0 573.3h1.2M941.8 573.3h1.2M966.5 573.3h1.2M991.2 573.3h1.2M1015.9 573.3h1.2M1040.6 573.3h1.2M1065.4 573.3h1.2M1090.1 573.3h1.2M1114.8 573.3h1.2M1139.5 573.3h1.2M1164.2 573.3h1.2M2.4 605.6h1.2M27.1 605.6h1.2M51.8 605.6h1.2M76.6 605.6h1.2M101.3 605.6h1.2M126.0 605.6h1.2M150.7 605.6h1.2M175.4 605.6h1.2M200.2 605.6h1.2M224.9 605.6h1.2M249.6 605.6h1.2M274.3 605.6h1.2M299.0 605.6h1.2M323.8 605.6h1.2M348.5 605.6h1.2M373.2 605.6h1.2M397.9 605.6h1.2M422.6 605.6h1.2M447.4 605.6h1.2M472.1 605.6h1.2M496.8 605.6h1.2M521.5 605.6h1.2M546.2 605.6h1.2M571.0 605.6h1.2M595.7 605.6h1.2M620.4 605.6h1.2M645.1 605.6h1.2M669.8 605.6h1.2M694.6 605.6h1.2M719.3 605.6h1.2M744.0 605.6h1.2M768.7 605.6h1.2M793.4 605.6h1.2M818.2 605.6h1.2M842.9 605.6h1.2M867.6 605.6h1.2M892.3 605.6h1.2M917.0 605.6h1.2M941.8 605.6h1.2M966.5 605.6h1.2M991.2 605.6h1.2M1015.9 605.6h1.2M1040.6 605.6h1.2M1065.4 605.6h1.2M1090.1 605.6h1.2M1114.8 605.6h1.2M1139.5 605.6h1.2M1164.2 605.6h1.2M2.4 637.9h1.2M27.1 637.9h1.2M51.8 637.9h1.2M76.6 637.9h1.2M101.3 637.9h1.2M126.0 637.9h1.2M150.7 637.9h1.2M175.4 637.9h1.2M200.2 637.9h1.2M224.9 637.9h1.2M249.6 637.9h1.2M274.3 637.9h1.2M299.0 637.9h1.2M323.8 637.9h1.2M348.5 637.9h1.2M373.2 637.9h1.2M397.9 637.9h1.2M422.6 637.9h1.2M447.4 637.9h1.2M472.1 637.9h1.2M496.8 637.9h1.2M521.5 637.9h1.2M546.2 637.9h1.2M571.0 637.9h1.2M595.7 637.9h1.2M620.4 637.9h1.2M645.1 637.9h1.2M669.8 637.9h1.2M694.6 637.9h1.2M719.3 637.9h1.2M744.0 637.9h1.2M768.7 637.9h1.2M793.4 637.9h1.2M818.2 637.9h1.2M842.9 637.9h1.2M867.6 637.9h1.2M892.3 637.9h1.2M917.0 637.9h1.2M941.8 637.9h1.2M966.5 637.9h1.2M991.2 637.9h1.2M1015.9 637.9h1.2M1040.6 637.9h1.2M1065.4 637.9h1.2M1090.1 637.9h1.2M1114.8 637.9h1.2M1139.5 637.9h1.2M1164.2 637.9h1.2M2.4 670.2h1.2M27.1 670.2h1.2M51.8 670.2h1.2M76.6 670.2h1.2M101.3 670.2h1.2M126.0 670.2h1.2M150.7 670.2h1.2M175.4 670.2h1.2M200.2 670.2h1.2M224.9 670.2h1.2M249.6 670.2h1.2M274.3 670.2h1.2M299.0 670.2h1.2M323.8 670.2h1.2M348.5 670.2h1.2M373.2 670.2h1.2M397.9 670.2h1.2M422.6 670.2h1.2M447.4 670.2h1.2M472.1 670.2h1.2M496.8 670.2h1.2M521.5 670.2h1.2M546.2 670.2h1.2M571.0 670.2h1.2M595.7 670.2h1.2M620.4 670.2h1.2M645.1 670.2h1.2M669.8 670.2h1.2M694.6 670.2h1.2M719.3 670.2h1.2M744.0 670.2h1.2M768.7 670.2h1.2M793.4 670.2h1.2M818.2 670.2h1.2M842.9 670.2h1.2M867.6 670.2h1.2M892.3 670.2h1.2M917.0 670.2h1.2M941.8 670.2h1.2M966.5 670.2h1.2M991.2 670.2h1.2M1015.9 670.2h1.2M1040.6 670.2h1.2M1065.4 670.2h1.2M1090.1 670.2h1.2M1114.8 670.2h1.2M1139.5 670.2h1.2M1164.2 670.2h1.2M2.4 702.5h1.2M27.1 702.5h1.2M51.8 702.5h1.2M76.6 702.5h1.2M101.3 702.5h1.2M126.0 702.5h1.2M150.7 702.5h1.2M175.4 702.5h1.2M200.2 702.5h1.2M224.9 702.5h1.2M249.6 702.5h1.2M274.3 702.5h1.2M299.0 702.5h1.2M323.8 702.5h1.2M348.5 702.5h1.2M373.2 702.5h1.2M397.9 702.5h1.2M422.6 702.5h1.2M447.4 702.5h1.2M472.1 702.5h1.2M496.8 702.5h1.2M521.5 702.5h1.2M546.2 702.5h1.2M571.0 702.5h1.2M595.7 702.5h1.2M620.4 702.5h1.2M645.1 702.5h1.2M669.8 702.5h1.2M694.6 702.5h1.2M719.3 702.5h1.2M744.0 702.5h1.2M768.7 702.5h1.2M793.4 702.5h1.2M818.2 702.5h1.2M842.9 702.5h1.2M867.6 702.5h1.2M892.3 702.5h1.2M917.0 702.5h1.2M941.8 702.5h1.2M966.5 702.5h1.2M991.2 702.5h1.2M1015.9 702.5h1.2M1040.6 702.5h1.2M1065.4 702.5h1.2M1090.1 702.5h1.2M1114.8 702.5h1.2M1139.5 702.5h1.2M1164.2 702.5h1.2M1189.0 702.5h1.2M1213.7 702.5h1.2M1238.4 702.5h1.2M2.4 386.0h1.2M2.4 392.4h1.2M2.4 398.9h1.2M2.4 405.3h1.2M2.4 418.3h1.2M2.4 424.7h1.2M2.4 431.2h1.2M2.4 437.6h1.2M2.4 450.6h1.2M2.4 457.0h1.2M2.4 463.5h1.2M2.4 469.9h1.2M2.4 482.9h1.2M2.4 489.3h1.2M2.4 495.8h1.2M2.4 502.2h1.2M2.4 515.2h1.2M2.4 521.6h1.2M2.4 528.1h1.2M2.4 534.5h1.2M2.4 547.5h1.2M2.4 553.9h1.2M2.4 560.4h1.2M2.4 566.8h1.2M2.4 579.8h1.2M2.4 586.2h1.2M2.4 592.7h1.2M2.4 599.1h1.2M2.4 612.1h1.2M2.4 618.5h1.2M2.4 625.0h1.2M2.4 631.4h1.2M2.4 644.4h1.2M2.4 650.8h1.2M2.4 657.3h1.2M2.4 663.7h1.2M2.4 676.7h1.2M2.4 683.1h1.2M2.4 689.6h1.2M2.4 696.0h1.2M126.0 386.0h1.2M126.0 392.4h1.2M126.0 398.9h1.2M126.0 405.3h1.2M126.0 418.3h1.2M126.0 424.7h1.2M126.0 431.2h1.2M126.0 437.6h1.2M126.0 450.6h1.2M126.0 457.0h1.2M126.0 463.5h1.2M126.0 469.9h1.2M126.0 482.9h1.2M126.0 489.3h1.2M126.0 495.8h1.2M126.0 502.2h1.2M126.0 515.2h1.2M126.0 521.6h1.2M126.0 528.1h1.2M126.0 534.5h1.2M126.0 547.5h1.2M126.0 553.9h1.2M126.0 560.4h1.2M126.0 566.8h1.2M126.0 579.8h1.2M126.0 586.2h1.2M126.0 592.7h1.2M126.0 599.1h1.2M126.0 612.1h1.2M126.0 618.5h1.2M126.0 625.0h1.2M126.0 631.4h1.2M126.0 644.4h1.2M126.0 650.8h1.2M126.0 657.3h1.2M126.0 663.7h1.2M126.0 676.7h1.2M126.0 683.1h1.2M126.0 689.6h1.2M126.0 696.0h1.2M249.6 386.0h1.2M249.6 392.4h1.2M249.6 398.9h1.2M249.6 405.3h1.2M249.6 418.3h1.2M249.6 424.7h1.2M249.6 431.2h1.2M249.6 437.6h1.2M249.6 450.6h1.2M249.6 457.0h1.2M249.6 463.5h1.2M249.6 469.9h1.2M249.6 482.9h1.2M249.6 489.3h1.2M249.6 495.8h1.2M249.6 502.2h1.2M249.6 515.2h1.2M249.6 521.6h1.2M249.6 528.1h1.2M249.6 534.5h1.2M249.6 547.5h1.2M249.6 553.9h1.2M249.6 560.4h1.2M249.6 566.8h1.2M249.6 579.8h1.2M249.6 586.2h1.2M249.6 592.7h1.2M249.6 599.1h1.2M249.6 612.1h1.2M249.6 618.5h1.2M249.6 625.0h1.2M249.6 631.4h1.2M249.6 644.4h1.2M249.6 650.8h1.2M249.6 657.3h1.2M249.6 663.7h1.2M249.6 676.7h1.2M249.6 683.1h1.2M249.6 689.6h1.2M249.6 696.0h1.2M373.2 386.0h1.2M373.2 392.4h1.2M373.2 398.9h1.2M373.2 405.3h1.2M373.2 418.3h1.2M373.2 424.7h1.2M373.2 431.2h1.2M373.2 437.6h1.2M373.2 450.6h1.2M373.2 457.0h1.2M373.2 463.5h1.2M373.2 469.9h1.2M373.2 482.9h1.2M373.2 489.3h1.2M373.2 495.8h1.2M373.2 502.2h1.2M373.2 515.2h1.2M373.2 521.6h1.2M373.2 528.1h1.2M373.2 534.5h1.2M373.2 547.5h1.2M373.2 553.9h1.2M373.2 560.4h1.2M373.2 566.8h1.2M373.2 579.8h1.2M373.2 586.2h1.2M373.2 592.7h1.2M373.2 599.1h1.2M373.2 612.1h1.2M373.2 618.5h1.2M373.2 625.0h1.2M373.2 631.4h1.2M373.2 644.4h1.2M373.2 650.8h1.2M373.2 657.3h1.2M373.2 663.7h1.2M373.2 676.7h1.2M373.2 683.1h1.2M373.2 689.6h1.2M373.2 696.0h1.2M496.8 386.0h1.2M496.8 392.4h1.2M496.8 398.9h1.2M496.8 405.3h1.2M496.8 418.3h1.2M496.8 424.7h1.2M496.8 431.2h1.2M496.8 437.6h1.2M496.8 450.6h1.2M496.8 457.0h1.2M496.8 463.5h1.2M496.8 469.9h1.2M496.8 482.9h1.2M496.8 489.3h1.2M496.8 495.8h1.2M496.8 502.2h1.2M496.8 515.2h1.2M496.8 521.6h1.2M496.8 528.1h1.2M496.8 534.5h1.2M496.8 547.5h1.2M496.8 553.9h1.2M496.8 560.4h1.2M496.8 566.8h1.2M496.8 579.8h1.2M496.8 586.2h1.2M496.8 592.7h1.2M496.8 599.1h1.2M496.8 612.1h1.2M496.8 618.5h1.2M496.8 625.0h1.2M496.8 631.4h1.2M496.8 644.4h1.2M496.8 650.8h1.2M496.8 657.3h1.2M496.8 663.7h1.2M496.8 676.7h1.2M496.8 683.1h1.2M496.8 689.6h1.2M496.8 696.0h1.2M620.4 386.0h1.2M620.4 392.4h1.2M620.4 398.9h1.2M620.4 405.3h1.2M620.4 418.3h1.2M620.4 424.7h1.2M620.4 431.2h1.2M620.4 437.6h1.2M620.4 450.6h1.2M620.4 457.0h1.2M620.4 463.5h1.2M620.4 469.9h1.2M620.4 482.9h1.2M620.4 489.3h1.2M620.4 495.8h1.2M620.4 502.2h1.2M620.4 515.2h1.2M620.4 521.6h1.2M620.4 528.1h1.2M620.4 534.5h1.2M620.4 547.5h1.2M620.4 553.9h1.2M620.4 560.4h1.2M620.4 566.8h1.2M620.4 579.8h1.2M620.4 586.2h1.2M620.4 592.7h1.2M620.4 599.1h1.2M620.4 612.1h1.2M620.4 618.5h1.2M620.4 625.0h1.2M620.4 631.4h1.2M620.4 644.4h1.2M620.4 650.8h1.2M620.4 657.3h1.2M620.4 663.7h1.2M620.4 676.7h1.2M620.4 683.1h1.2M620.4 689.6h1.2M620.4 696.0h1.2M744.0 386.0h1.2M744.0 392.4h1.2M744.0 398.9h1.2M744.0 405.3h1.2M744.0 418.3h1.2M744.0 424.7h1.2M744.0 431.2h1.2M744.0 437.6h1.2M744.0 450.6h1.2M744.0 457.0h1.2M744.0 463.5h1.2M744.0 469.9h1.2M744.0 482.9h1.2M744.0 489.3h1.2M744.0 495.8h1.2M744.0 502.2h1.2M744.0 515.2h1.2M744.0 521.6h1.2M744.0 528.1h1.2M744.0 534.5h1.2M744.0 547.5h1.2M744.0 553.9h1.2M744.0 560.4h1.2M744.0 566.8h1.2M744.0 579.8h1.2M744.0 586.2h1.2M744.0 592.7h1.2M744.0 599.1h1.2M744.0 612.1h1.2M744.0 618.5h1.2M744.0 625.0h1.2M744.0 631.4h1.2M744.0 644.4h1.2M744.0 650.8h1.2M744.0 657.3h1.2M744.0 663.7h1.2M744.0 676.7h1.2M744.0 683.1h1.2M744.0 689.6h1.2M744.0 696.0h1.2M867.6 386.0h1.2M867.6 392.4h1.2M867.6 398.9h1.2M867.6 405.3h1.2M867.6 418.3h1.2M867.6 424.7h1.2M867.6 431.2h1.2M867.6 437.6h1.2M867.6 450.6h1.2M867.6 457.0h1.2M867.6 463.5h1.2M867.6 469.9h1.2M867.6 482.9h1.2M867.6 489.3h1.2M867.6 495.8h1.2M867.6 502.2h1.2M867.6 515.2h1.2M867.6 521.6h1.2M867.6 528.1h1.2M867.6 534.5h1.2M867.6 547.5h1.2M867.6 553.9h1.2M867.6 560.4h1.2M867.6 566.8h1.2M867.6 579.8h1.2M867.6 586.2h1.2M867.6 592.7h1.2M867.6 599.1h1.2M867.6 612.1h1.2M867.6 618.5h1.2M867.6 625.0h1.2M867.6 631.4h1.2M867.6 644.4h1.2M867.6 650.8h1.2M867.6 657.3h1.2M867.6 663.7h1.2M867.6 676.7h1.2M867.6 683.1h1.2M867.6 689.6h1.2M867.6 696.0h1.2M991.2 386.0h1.2M991.2 392.4h1.2M991.2 398.9h1.2M991.2 405.3h1.2M991.2 418.3h1.2M991.2 424.7h1.2M991.2 431.2h1.2M991.2 437.6h1.2M991.2 450.6h1.2M991.2 457.0h1.2M991.2 463.5h1.2M991.2 469.9h1.2M991.2 482.9h1.2M991.2 489.3h1.2M991.2 495.8h1.2M991.2 502.2h1.2M991.2 515.2h1.2M991.2 521.6h1.2M991.2 528.1h1.2M991.2 534.5h1.2M991.2 547.5h1.2M991.2 553.9h1.2M991.2 560.4h1.2M991.2 566.8h1.2M991.2 579.8h1.2M991.2 586.2h1.2M991.2 592.7h1.2M991.2 599.1h1.2M991.2 612.1h1.2M991.2 618.5h1.2M991.2 625.0h1.2M991.2 631.4h1.2M991.2 644.4h1.2M991.2 650.8h1.2M991.2 657.3h1.2M991.2 663.7h1.2M991.2 676.7h1.2M991.2 683.1h1.2M991.2 689.6h1.2M991.2 696.0h1.2M1114.8 386.0h1.2M1114.8 392.4h1.2M1114.8 398.9h1.2M1114.8 405.3h1.2M1114.8 418.3h1.2M1114.8 424.7h1.2M1114.8 431.2h1.2M1114.8 437.6h1.2M1114.8 450.6h1.2M1114.8 457.0h1.2M1114.8 463.5h1.2M1114.8 469.9h1.2M1114.8 482.9h1.2M1114.8 489.3h1.2M1114.8 495.8h1.2M1114.8 502.2h1.2M1114.8 515.2h1.2M1114.8 521.6h1.2M1114.8 528.1h1.2M1114.8 534.5h1.2M1114.8 547.5h1.2M1114.8 553.9h1.2M1114.8 560.4h1.2M1114.8 566.8h1.2M1114.8 579.8h1.2M1114.8 586.2h1.2M1114.8 592.7h1.2M1114.8 599.1h1.2M1114.8 612.1h1.2M1114.8 618.5h1.2M1114.8 625.0h1.2M1114.8 631.4h1.2M1114.8 644.4h1.2M1114.8 650.8h1.2M1114.8 657.3h1.2M1114.8 663.7h1.2M1114.8 676.7h1.2M1114.8 683.1h1.2M1114.8 689.6h1.2M1114.8 696.0h1.2" stroke="#666668" stroke-width="1.1" fill="none" clip-path="url(#cg)"/><path d="M44.4 217.5H1216" stroke="#b0b0b0" stroke-width="1.2" stroke-dasharray="4.2 3.03" fill="none"/><path d="M73 541.3H1216" stroke="#b0b0b0" stroke-width="1.2" stroke-dasharray="4.2 3.03" fill="none"/><path d="M621.5 83V702" stroke="#bcbcbc" stroke-width="1.3" stroke-dasharray="4 3.2" fill="none"/><path d="M154.9 380V702M463.4 380V702" stroke="#b68c64" stroke-width="1.25" stroke-dasharray="3.5 3.7" fill="none"/><path d="M3 379H1239" stroke="#8e8e90" stroke-width="1.7" fill="none"/><g stroke="#d0d0d0" stroke-width="1.5" fill="none"><path d="M421 37.5H415.7V49.5H421M415.7 43.7H826.5M821.5 37.5H826.5V49.5H821.5"/></g><path d="M586.1 31.8V54M745.1 31.8V54" stroke="#e4e4e4" stroke-width="1.5" stroke-dasharray="4.2 1.8" fill="none"/></svg>
<div class="xlab" style="left:126.1px;width:80px;margin-left:-40px;text-align:center"><span>-16 ns</span></div><div class="xlab" style="left:249.7px;width:80px;margin-left:-40px;text-align:center"><span>-12 ns</span></div><div class="xlab" style="left:373.3px;width:80px;margin-left:-40px;text-align:center"><span>-8 ns</span></div><div class="xlab" style="left:496.9px;width:80px;margin-left:-40px;text-align:center"><span>-4 ns</span></div><div class="xlab" style="left:620.5px;width:80px;margin-left:-40px;text-align:center"><span>0 s</span></div><div class="xlab" style="left:744.1px;width:80px;margin-left:-40px;text-align:center"><span>4 ns</span></div><div class="xlab" style="left:867.7px;width:80px;margin-left:-40px;text-align:center"><span>8 ns</span></div><div class="xlab" style="left:991.3px;width:80px;margin-left:-40px;text-align:center"><span>12 ns</span></div><div class="xlab" style="left:1114.9px;width:80px;margin-left:-40px;text-align:center"><span>16 ns</span></div>
<div class="ylab" style="top:81.8px;color:#cdd640">440 mV</div><div class="ylab" style="top:114.1px;color:#cdd640">330 mV</div><div class="ylab" style="top:146.4px;color:#cdd640">220 mV</div><div class="ylab" style="top:178.7px;color:#cdd640">110 mV</div><div class="ylab" style="top:211.0px;color:#cdd640">0 V</div><div class="ylab" style="top:243.3px;color:#cdd640">-110 mV</div><div class="ylab" style="top:275.6px;color:#cdd640">-220 mV</div><div class="ylab" style="top:307.9px;color:#cdd640">-330 mV</div><div class="ylab" style="top:340.2px;color:#cdd640">-440 mV</div><div class="ylab" style="top:405.8px;color:#30c0a2">520 mV</div><div class="ylab" style="top:438.1px;color:#30c0a2">390 mV</div><div class="ylab" style="top:470.4px;color:#30c0a2">260 mV</div><div class="ylab" style="top:502.7px;color:#30c0a2">130 mV</div><div class="ylab" style="top:535.0px;color:#30c0a2">0 V</div><div class="ylab" style="top:567.3px;color:#30c0a2">-130 mV</div><div class="ylab" style="top:599.6px;color:#30c0a2">-260 mV</div><div class="ylab" style="top:631.9px;color:#30c0a2">-390 mV</div><div class="ylab" style="top:664.2px;color:#30c0a2">-520 mV</div>
<svg class="abs" style="left:0;top:0" width="1400" height="787" viewBox="0 0 1400 787"><polyline points="3.0,218.3 5.5,210.1 7.9,203.1 10.4,195.6 12.9,187.3 15.4,179.8 17.8,172.2 20.3,165.9 22.8,158.3 25.2,151.4 27.7,144.5 30.2,138.8 32.7,132.5 35.1,126.8 37.6,121.1 40.1,115.4 42.6,111.0 45.0,104.7 47.5,98.4 50.0,92.7 52.4,88.3 54.9,84.5 57.4,80.1 59.9,76.9 62.3,71.9 64.8,70.0 67.3,67.5 69.7,67.5 72.2,65.6 74.7,65.6 77.2,64.3 79.6,63.1 82.1,63.1 84.6,61.8 87.0,63.1 89.5,63.7 92.0,65.6 94.5,67.5 96.9,68.7 99.4,72.5 101.9,76.3 104.4,81.4 106.8,85.8 109.3,89.6 111.8,94.6 114.2,97.8 116.7,104.7 119.2,110.4 121.7,117.3 124.1,123.0 126.6,127.4 129.1,135.0 131.5,140.7 134.0,148.9 136.5,152.7 139.0,160.9 141.4,167.2 143.9,176.0 146.4,182.3 148.8,190.5 151.3,197.4 153.8,205.0 156.3,212.6 158.7,220.2 161.2,225.8 163.7,234.7 166.2,241.6 168.6,249.2 171.1,255.5 173.6,263.7 176.0,271.9 178.5,277.6 181.0,284.5 183.5,290.8 185.9,299.0 188.4,305.3 190.9,311.6 193.3,317.9 195.8,322.4 198.3,329.3 200.8,336.2 203.2,343.2 205.7,346.3 208.2,348.2 210.6,352.6 213.1,356.4 215.6,359.6 218.1,362.1 220.5,364.6 223.0,367.8 225.5,369.0 228.0,369.7 230.4,370.9 232.9,371.6 235.4,371.6 237.8,370.9 240.3,372.2 242.8,371.6 245.3,370.3 247.7,368.4 250.2,367.1 252.7,364.0 255.1,359.6 257.6,355.8 260.1,352.6 262.6,348.2 265.0,343.8 267.5,337.5 270.0,331.8 272.4,326.8 274.9,321.7 277.4,316.7 279.9,311.0 282.3,304.1 284.8,297.1 287.3,289.5 289.8,283.2 292.2,276.9 294.7,270.6 297.2,263.7 299.6,256.7 302.1,249.2 304.6,241.6 307.1,235.3 309.5,227.1 312.0,218.9 314.5,211.3 316.9,205.6 319.4,198.1 321.9,189.2 324.4,180.4 326.8,173.5 329.3,167.8 331.8,159.6 334.2,152.7 336.7,145.1 339.2,138.8 341.7,131.2 344.1,125.5 346.6,119.2 349.1,114.8 351.6,109.1 354.0,104.1 356.5,97.1 359.0,92.1 361.4,87.7 363.9,83.3 366.4,78.8 368.9,75.1 371.3,72.5 373.8,70.6 376.3,67.5 378.7,65.0 381.2,63.7 383.7,62.4 386.2,62.4 388.6,61.8 391.1,61.2 393.6,61.2 396.0,61.8 398.5,63.7 401.0,65.6 403.5,68.1 405.9,70.6 408.4,73.2 410.9,77.6 413.4,80.7 415.8,84.5 418.3,87.7 420.8,93.4 423.2,98.4 425.7,104.7 428.2,109.1 430.7,114.2 433.1,119.8 435.6,126.8 438.1,133.7 440.5,140.0 443.0,147.0 445.5,153.3 448.0,160.2 450.4,167.2 452.9,173.5 455.4,181.0 457.8,186.7 460.3,196.8 462.8,205.6 465.3,213.8 467.7,220.2 470.2,226.5 472.7,234.7 475.2,243.5 477.6,251.1 480.1,259.3 482.6,264.9 485.0,271.3 487.5,277.6 490.0,284.5 492.5,292.1 494.9,299.0 497.4,306.0 499.9,311.6 502.3,316.7 504.8,323.0 507.3,327.4 509.8,334.3 512.2,338.1 514.7,344.4 517.2,347.0 519.6,352.0 522.1,355.2 524.6,358.9 527.1,362.7 529.5,365.9 532.0,370.3 534.5,370.9 537.0,372.2 539.4,372.2 541.9,373.5 544.4,372.2 546.8,372.2 549.3,371.6 551.8,372.2 554.3,369.0 556.7,368.4 559.2,365.9 561.7,363.4 564.1,357.7 566.6,353.3 569.1,350.1 571.6,347.0 574.0,343.8 576.5,339.4 579.0,335.0 581.4,329.3 583.9,322.4 586.4,316.0 588.9,309.7 591.3,304.1 593.8,297.1 596.3,290.8 598.8,283.9 601.2,276.9 603.7,269.4 606.2,262.4 608.6,254.9 611.1,246.7 613.6,239.7 616.1,231.5 618.5,224.6 621.0,217.6 623.5,210.1 625.9,203.8 628.4,194.9 630.9,188.6 633.4,181.0 635.8,174.1 638.3,165.9 640.8,157.7 643.2,150.8 645.7,144.5 648.2,138.8 650.7,132.5 653.1,125.5 655.6,119.8 658.1,113.5 660.6,107.9 663.0,102.2 665.5,97.1 668.0,93.4 670.4,88.9 672.9,84.5 675.4,80.7 677.9,76.3 680.3,74.4 682.8,70.0 685.3,68.1 687.7,65.0 690.2,65.0 692.7,63.7 695.2,62.4 697.6,60.5 700.1,61.8 702.6,61.8 705.0,62.4 707.5,63.1 710.0,64.3 712.5,67.5 714.9,70.0 717.4,73.2 719.9,75.1 722.4,77.6 724.8,83.3 727.3,89.6 729.8,94.6 732.2,99.7 734.7,104.1 737.2,111.0 739.7,114.8 742.1,120.5 744.6,125.5 747.1,132.5 749.5,139.4 752.0,147.0 754.5,153.3 757.0,160.2 759.4,167.2 761.9,174.7 764.4,181.0 766.8,188.6 769.3,194.9 771.8,202.5 774.3,210.7 776.7,220.2 779.2,227.7 781.7,235.3 784.2,241.6 786.6,249.8 789.1,256.7 791.6,264.9 794.0,271.9 796.5,279.5 799.0,285.8 801.5,294.0 803.9,299.6 806.4,306.0 808.9,311.6 811.3,318.6 813.8,324.9 816.3,328.7 818.8,333.7 821.2,338.1 823.7,343.2 826.2,348.2 828.6,353.9 831.1,357.1 833.6,360.2 836.1,362.1 838.5,364.6 841.0,365.9 843.5,367.8 846.0,370.3 848.4,371.6 850.9,372.8 853.4,373.5 855.8,374.1 858.3,373.5 860.8,372.8 863.3,370.9 865.7,369.0 868.2,365.3 870.7,362.1 873.1,358.3 875.6,354.5 878.1,349.5 880.6,347.0 883.0,343.8 885.5,339.4 888.0,333.7 890.4,326.8 892.9,321.1 895.4,314.8 897.9,309.1 900.3,302.8 902.8,297.8 905.3,292.7 907.8,286.4 910.2,277.6 912.7,270.0 915.2,262.4 917.6,256.1 920.1,247.9 922.6,241.6 925.1,233.4 927.5,226.5 930.0,218.9 932.5,210.7 934.9,202.5 937.4,195.6 939.9,187.3 942.4,179.1 944.8,169.7 947.3,164.6 949.8,158.3 952.2,153.9 954.7,146.3 957.2,139.4 959.7,132.5 962.1,127.4 964.6,121.1 967.1,114.2 969.6,107.9 972.0,102.8 974.5,99.7 977.0,94.6 979.4,89.6 981.9,83.9 984.4,78.2 986.9,75.7 989.3,73.8 991.8,71.9 994.3,68.7 996.7,65.0 999.2,63.7 1001.7,61.2 1004.2,59.9 1006.6,59.3 1009.1,60.5 1011.6,61.8 1014.0,62.4 1016.5,63.1 1019.0,63.7 1021.5,67.5 1023.9,70.0 1026.4,72.5 1028.9,75.1 1031.4,78.8 1033.8,83.3 1036.3,88.9 1038.8,94.0 1041.2,99.0 1043.7,103.4 1046.2,109.1 1048.7,114.8 1051.1,121.1 1053.6,125.5 1056.1,131.8 1058.5,138.8 1061.0,146.3 1063.5,153.9 1066.0,160.9 1068.4,167.2 1070.9,172.8 1073.4,179.1 1075.8,187.3 1078.3,196.2 1080.8,203.8 1083.3,212.0 1085.7,218.9 1088.2,228.4 1090.7,235.9 1093.2,242.2 1095.6,249.2 1098.1,257.4 1100.6,265.6 1103.0,271.3 1105.5,276.3 1108.0,283.2 1110.5,291.4 1112.9,299.0 1115.4,306.0 1117.9,312.3 1120.3,317.9 1122.8,324.2 1125.3,330.6 1127.8,335.6 1130.2,340.6 1132.7,345.7 1135.2,348.8 1137.6,351.4 1140.1,354.5 1142.6,358.9 1145.1,362.7 1147.5,365.3 1150.0,367.8 1152.5,369.0 1155.0,371.6 1157.4,372.2 1159.9,374.1 1162.4,374.1 1164.8,373.5 1167.3,372.2 1169.8,369.7 1172.3,367.8 1174.7,365.9 1177.2,365.3 1179.7,363.4 1182.1,360.8 1184.6,356.4 1187.1,352.0 1189.6,347.0 1192.0,342.5 1194.5,338.8 1197.0,333.7 1199.4,328.0 1201.9,323.0 1204.4,317.3 1206.9,310.4 1209.3,304.7 1211.8,298.4 1214.3,292.7 1216.8,283.9 1219.2,276.3 1221.7,268.1 1224.2,261.8 1226.6,254.9 1229.1,247.3 1231.6,241.6 1234.1,234.0 1236.5,226.5 1239.0,218.9" fill="none" stroke="#b4c03e" stroke-width="0.95" stroke-linejoin="round" clip-path="url(#c1)"/><polyline points="3.0,549.2 5.5,556.1 7.9,562.4 10.4,570.7 12.9,574.4 15.4,580.7 17.8,584.5 20.3,592.1 22.8,597.8 25.2,604.7 27.7,610.4 30.2,616.1 32.7,622.4 35.1,627.4 37.6,631.8 40.1,636.3 42.6,640.7 45.0,643.8 47.5,648.2 50.0,652.0 52.4,657.1 54.9,660.9 57.4,663.4 59.9,666.5 62.3,667.2 64.8,669.1 67.3,670.3 69.7,672.2 72.2,672.2 74.7,672.8 77.2,674.1 79.6,673.5 82.1,673.5 84.6,672.8 87.0,672.8 89.5,669.1 92.0,667.2 94.5,667.2 96.9,665.3 99.4,662.1 101.9,657.7 104.4,654.6 106.8,650.1 109.3,645.7 111.8,641.9 114.2,636.9 116.7,631.2 119.2,626.2 121.7,622.4 124.1,617.3 126.6,611.7 129.1,606.0 131.5,600.9 134.0,594.6 136.5,588.3 139.0,582.0 141.4,576.3 143.9,569.4 146.4,563.1 148.8,558.0 151.3,550.5 153.8,543.5 156.3,536.6 158.7,530.3 161.2,524.0 163.7,517.0 166.2,510.7 168.6,503.1 171.1,496.2 173.6,489.9 176.0,483.6 178.5,478.5 181.0,474.1 183.5,469.7 185.9,464.7 188.4,459.0 190.9,453.3 193.3,447.0 195.8,441.3 198.3,438.8 200.8,433.8 203.2,430.0 205.7,424.9 208.2,422.4 210.6,420.5 213.1,419.2 215.6,418.0 218.1,413.6 220.5,411.0 223.0,409.2 225.5,409.8 228.0,407.9 230.4,407.3 232.9,406.6 235.4,407.9 237.8,411.0 240.3,412.3 242.8,412.3 245.3,411.7 247.7,413.6 250.2,416.7 252.7,419.9 255.1,423.7 257.6,427.4 260.1,431.9 262.6,434.4 265.0,436.9 267.5,440.1 270.0,443.8 272.4,450.2 274.9,455.2 277.4,461.5 279.9,467.8 282.3,474.8 284.8,481.1 287.3,488.0 289.8,491.8 292.2,496.8 294.7,501.3 297.2,506.9 299.6,513.9 302.1,520.8 304.6,527.1 307.1,533.4 309.5,539.7 312.0,547.3 314.5,554.9 316.9,561.8 319.4,568.8 321.9,574.4 324.4,580.7 326.8,586.4 329.3,594.0 331.8,598.4 334.2,603.5 336.7,607.9 339.2,615.4 341.7,621.8 344.1,626.8 346.6,630.6 349.1,635.0 351.6,641.3 354.0,647.0 356.5,650.1 359.0,652.7 361.4,656.4 363.9,661.5 366.4,665.3 368.9,667.8 371.3,668.4 373.8,669.7 376.3,670.3 378.7,672.2 381.2,674.1 383.7,675.4 386.2,674.7 388.6,674.1 391.1,673.5 393.6,673.5 396.0,671.6 398.5,669.7 401.0,667.8 403.5,666.5 405.9,664.0 408.4,662.8 410.9,659.0 413.4,656.4 415.8,651.4 418.3,646.4 420.8,642.6 423.2,640.0 425.7,633.7 428.2,626.8 430.7,621.8 433.1,616.1 435.6,611.0 438.1,606.0 440.5,601.6 443.0,594.6 445.5,587.1 448.0,580.1 450.4,574.4 452.9,569.4 455.4,565.0 457.8,558.0 460.3,551.7 462.8,544.2 465.3,538.5 467.7,531.5 470.2,525.9 472.7,519.6 475.2,513.2 477.6,506.9 480.1,501.3 482.6,493.7 485.0,486.7 487.5,481.1 490.0,475.4 492.5,469.1 494.9,462.1 497.4,457.1 499.9,452.7 502.3,448.9 504.8,443.8 507.3,438.8 509.8,434.4 512.2,430.6 514.7,426.8 517.2,423.7 519.6,419.9 522.1,418.0 524.6,415.5 527.1,414.2 529.5,412.3 532.0,411.0 534.5,407.9 537.0,406.0 539.4,405.4 541.9,406.6 544.4,407.3 546.8,406.6 549.3,407.3 551.8,409.2 554.3,411.7 556.7,414.8 559.2,417.4 561.7,420.5 564.1,423.7 566.6,428.1 569.1,431.9 571.6,435.0 574.0,438.8 576.5,442.0 579.0,447.6 581.4,452.0 583.9,457.1 586.4,462.1 588.9,467.8 591.3,472.2 593.8,477.9 596.3,483.6 598.8,491.8 601.2,497.5 603.7,503.1 606.2,508.8 608.6,514.5 611.1,521.4 613.6,528.4 616.1,536.6 618.5,543.5 621.0,550.5 623.5,555.5 625.9,561.2 628.4,566.2 630.9,572.5 633.4,578.9 635.8,584.5 638.3,591.5 640.8,597.8 643.2,605.3 645.7,610.4 648.2,615.4 650.7,621.1 653.1,626.8 655.6,630.6 658.1,635.0 660.6,640.0 663.0,644.5 665.5,648.2 668.0,651.4 670.4,655.8 672.9,659.6 675.4,662.8 677.9,666.5 680.3,667.8 682.8,670.3 685.3,671.0 687.7,671.6 690.2,672.2 692.7,673.5 695.2,674.7 697.6,674.7 700.1,672.8 702.6,672.2 705.0,672.2 707.5,671.6 710.0,670.3 712.5,667.8 714.9,665.3 717.4,662.1 719.9,658.3 722.4,655.2 724.8,651.4 727.3,647.6 729.8,643.2 732.2,637.5 734.7,633.1 737.2,628.1 739.7,623.6 742.1,618.0 744.6,612.3 747.1,606.6 749.5,600.9 752.0,595.3 754.5,588.9 757.0,582.0 759.4,574.4 761.9,568.8 764.4,562.4 766.8,556.8 769.3,551.1 771.8,544.2 774.3,539.7 776.7,532.8 779.2,525.9 781.7,517.7 784.2,511.3 786.6,504.4 789.1,499.4 791.6,491.8 794.0,484.9 796.5,477.9 799.0,473.5 801.5,469.7 803.9,464.7 806.4,457.7 808.9,452.0 811.3,447.0 813.8,443.8 816.3,440.1 818.8,435.6 821.2,431.2 823.7,426.8 826.2,422.4 828.6,419.2 831.1,417.4 833.6,415.5 836.1,411.7 838.5,409.8 841.0,409.2 843.5,408.5 846.0,407.9 848.4,404.1 850.9,405.4 853.4,406.0 855.8,409.2 858.3,409.2 860.8,411.0 863.3,413.6 865.7,417.4 868.2,419.2 870.7,421.1 873.1,423.7 875.6,424.9 878.1,428.1 880.6,430.6 883.0,436.9 885.5,441.3 888.0,447.0 890.4,451.4 892.9,456.5 895.4,460.9 897.9,465.9 900.3,472.2 902.8,479.2 905.3,486.1 907.8,491.8 910.2,497.5 912.7,503.1 915.2,510.1 917.6,516.4 920.1,522.7 922.6,529.0 925.1,535.3 927.5,540.4 930.0,547.3 932.5,553.0 934.9,559.3 937.4,567.5 939.9,574.4 942.4,582.6 944.8,587.7 947.3,594.0 949.8,597.8 952.2,603.5 954.7,608.5 957.2,614.8 959.7,620.5 962.1,626.8 964.6,630.6 967.1,635.6 969.6,640.7 972.0,645.7 974.5,650.8 977.0,653.3 979.4,656.4 981.9,658.3 984.4,662.1 986.9,665.3 989.3,668.4 991.8,669.7 994.3,671.6 996.7,673.5 999.2,673.5 1001.7,672.8 1004.2,672.2 1006.6,672.8 1009.1,673.5 1011.6,671.6 1014.0,671.0 1016.5,669.7 1019.0,668.4 1021.5,665.3 1023.9,662.8 1026.4,660.2 1028.9,658.3 1031.4,655.2 1033.8,652.0 1036.3,647.6 1038.8,641.9 1041.2,637.5 1043.7,633.1 1046.2,629.3 1048.7,623.0 1051.1,617.3 1053.6,612.3 1056.1,606.6 1058.5,601.6 1061.0,594.6 1063.5,588.9 1066.0,583.3 1068.4,577.6 1070.9,570.7 1073.4,564.3 1075.8,557.4 1078.3,550.5 1080.8,543.5 1083.3,536.6 1085.7,529.6 1088.2,524.0 1090.7,517.7 1093.2,512.0 1095.6,506.3 1098.1,500.0 1100.6,494.3 1103.0,487.4 1105.5,481.7 1108.0,475.4 1110.5,469.1 1112.9,462.8 1115.4,458.4 1117.9,452.7 1120.3,447.6 1122.8,443.2 1125.3,438.8 1127.8,434.4 1130.2,430.0 1132.7,425.6 1135.2,423.0 1137.6,419.2 1140.1,415.5 1142.6,412.9 1145.1,412.3 1147.5,411.0 1150.0,409.8 1152.5,408.5 1155.0,410.4 1157.4,409.8 1159.9,407.9 1162.4,406.0 1164.8,407.3 1167.3,407.9 1169.8,410.4 1172.3,411.7 1174.7,414.8 1177.2,417.4 1179.7,419.2 1182.1,422.4 1184.6,426.8 1187.1,429.3 1189.6,434.4 1192.0,436.3 1194.5,442.6 1197.0,446.4 1199.4,452.0 1201.9,457.7 1204.4,462.8 1206.9,467.8 1209.3,472.9 1211.8,480.4 1214.3,486.7 1216.8,493.1 1219.2,497.5 1221.7,503.1 1224.2,508.2 1226.6,514.5 1229.1,520.8 1231.6,528.4 1234.1,537.2 1236.5,544.2 1239.0,551.1" fill="none" stroke="#3fa48c" stroke-width="0.95" stroke-linejoin="round" clip-path="url(#c2)"/><path d="M509.8 102.7H989" stroke="#cf1232" stroke-width="1.2" stroke-dasharray="12 3.2" fill="none" clip-path="url(#cred)"/><path d="M516 56V702M992.6 56V702" stroke="#a0a0a2" stroke-width="1.4" fill="none"/><g stroke="#b4b4b6" stroke-width="1.2" fill="none"><circle cx="516" cy="349.5" r="3.2"/><path d="M518.5 347l3.5-3.5M513.5 352l-3.5 3.5M513.5 347l-3-3M518.5 352l3 3"/></g><path d="M616.6 31.6c1 -.6 8.4 -.6 9.6 0c.8 1.2 -1.6 3.4 -4.8 3.4s-5.6-2.2-4.8-3.4z" fill="#f08a28"/><path d="M616.3 42.3h10v8.2h-3.2l-1.8 2.8l-1.8-2.8h-3.2z" fill="#1e1208" stroke="#e8923c" stroke-width="1.1"/><path d="M613.8 55.3h15l-7.5 6.8z" fill="#f08a28"/><path d="M614.6 63.3h13.6v14.2h-4.2l-2.6 4.6l-2.6-4.6h-4.2z" fill="#000" stroke="#f08a28" stroke-width="1.4"/><path d="M7.6 204.2h19.6l12.8 13l-12.8 12.6h-19.6a2.4 2.4 0 0 1 -2.4 -2.4v-20.8a2.4 2.4 0 0 1 2.4 -2.4z" fill="#f6ea30"/><path d="M7.5 528.3h55.4l5.6 12.4l-5.6 12.3h-55.4a2 2 0 0 1 -2 -2v-20.7a2 2 0 0 1 2 -2zM31 528.3V553" fill="#04201e" stroke="#2fd0c4" stroke-width="1.3"/><rect x="515.5" y="56" width="23" height="19" rx="2" fill="#2e2e30"/><path d="M516 56V76" stroke="#8c8c8e" stroke-width="1.3"/><rect x="491.7" y="56.3" width="23.6" height="18.4" rx="4" fill="#e2da36"/><circle cx="527.2" cy="65.4" r="9.6" fill="#2a88dc"/><rect x="970.5" y="56" width="23" height="19" rx="2" fill="#2e2e30"/><path d="M992.5 56V76" stroke="#8c8c8e" stroke-width="1.3"/><rect x="994.2" y="56.3" width="24.2" height="18.6" rx="4" fill="#e2da36"/><circle cx="981.4" cy="65.2" r="9.6" fill="#2a88dc"/></svg>
<div class="t" style="left:617.2px;top:43.2px;font-size:8px;font-weight:700;color:#f0a860;width:8px;text-align:center">T</div><div class="t" style="left:615px;top:64.5px;font-size:12px;font-weight:700;color:#f4b078;width:13px;text-align:center">T</div><div class="t" style="left:492px;top:58.4px;width:23.6px;text-align:center;font-size:13px;letter-spacing:-.6px;color:#2a2606">C1</div><div class="t" style="left:994.5px;top:58.4px;width:24px;text-align:center;font-size:13px;letter-spacing:-.6px;color:#2a2606">C1</div><div class="t" style="left:517.6px;top:58.8px;width:19.2px;text-align:center;font-size:13px;color:#f0f4ff">A</div><div class="t" style="left:971.8px;top:58.8px;width:19.2px;text-align:center;font-size:13px;color:#f0f4ff">B</div><div class="t" style="left:13.8px;top:210.6px;font-size:11.5px;font-weight:700;color:#2a2606;letter-spacing:-.7px">C 1</div><div class="t" style="left:9.6px;top:534.6px;font-size:12px;color:#30d2c6;letter-spacing:-.3px">C 2</div><div class="t" style="left:35.6px;top:534.6px;font-size:12px;color:#30d2c6;letter-spacing:-.1px">1 mV</div>
<div class="ro" style="left:379.7px;top:81.2px;width:135.6px;height:41.2px;border-radius:4px 0 0 4px"><span class="t" style="left:4px;top:3.2px">t: -3.415 ns</span><span class="t" style="left:4px;top:19.9px">v: -452.401 mV</span></div><div class="ro" style="left:625.4px;top:81.2px;width:257.5px;height:45.4px;border-radius:4px"><span class="t" style="left:4.4px;top:4.9px">Δt: 15.415 ns</span><span class="t" style="left:111px;top:4.9px">1/Δt: 64.87 MHz</span><span class="t" style="left:4.4px;top:23.9px">Δv: 952.245 mV</span><span class="t" style="left:122.6px;top:23.9px">Δv/Δt: 61.77 MV/s</span></div><div class="ro" style="left:993.2px;top:81.2px;width:135.6px;height:41.2px;border-radius:0 4px 4px 0"><span class="t" style="left:4px;top:3.2px">t: 12 ns</span><span class="t" style="left:4px;top:19.9px">v: 499.843 mV</span></div>
<svg class="abs" style="left:1195px;top:55px" width="50" height="180" viewBox="1195 55 50 180"><rect x="1227" y="82" width="10" height="13" fill="#000"/><path d="M1201.8 61H1234.2V93.2z" fill="#59595b"/><circle cx="1227.3" cy="67.4" r="3.7" stroke="#a6a6a8" stroke-width="1.4" fill="#6a6a6c"/><path d="M1224.5 70.3L1218.6 76.2" stroke="#a6a6a8" stroke-width="2.2" stroke-linecap="round" fill="none"/><rect x="1225" y="209" width="14.2" height="16" fill="#000"/><path d="M1224.8 216.6l8-7.4v6.2h6.5v2.6h-6.5v6.2z" fill="#f4e626"/></svg>
<div id="rpanel"></div>
<div class="t" style="left:1254px;width:146px;text-align:center;top:33.5px;font-size:15px;font-weight:700;color:#f4f4f4">添加新...</div>
<div class="btn on" style="left:1261px;top:55.7px">光标</div><div class="btn" style="left:1331px;top:55.7px"><span style="font-size:15.6px">Callout</span></div><div class="btn" style="left:1261px;top:101.0px">测量</div><div class="btn" style="left:1331px;top:101.0px">搜索</div><div class="btn" style="left:1261px;top:146.0px">结果表</div><div class="btn" style="left:1331px;top:146.0px">绘图</div><div class="btn" style="left:1261px;top:195.0px"></div><div class="btn" style="left:1331px;top:195.0px">更多...</div><div class="hsep" style="left:1257px;top:189.5px;width:143px"></div><div class="hsep" style="left:1257px;top:239px;width:143px"></div>
<svg class="abs" style="left:1280px;top:203px" width="26" height="24" viewBox="0 0 26 24"><rect x="3.9" y="2.7" width="16.2" height="14.4" fill="none" stroke="#c8c8c8" stroke-width="1.7" stroke-dasharray="2.9 2.2" stroke-dashoffset="1.4"/><circle cx="13.4" cy="8.3" r="3.2" fill="none" stroke="#d0d0d0" stroke-width="1.4"/><path d="M11 10.6L7.6 13.4" stroke="#d0d0d0" stroke-width="2" stroke-linecap="round"/><path d="M17 14.2l5.2 2.2l-2 .9l1.4 2.4l-1.2 .7l-1.4-2.4l-1.5 1.5z" fill="#c8c8c8"/></svg>
<div class="badge" style="left:1257.0px;top:249.0px;width:140.4px;height:53.0px;background:#c9c9cb"><div class="hd" style="height:18.6px;background:#5a5a5c"></div></div><div class="t" style="left:1262.6px;top:250.81px;font-size:14.4px;color:#f2f2f2">Meas 1</div><div class="abs" style="left:1370.2px;top:252.4px;width:21.0px;height:11.8px;background:#f6ea2c;border-radius:5px;border:1px solid #5a5420"></div><div class="t" style="left:1370.2px;top:253.53px;font-size:10px;color:#1c1c1c;font-weight:700;width:21.0px;text-align:center">1</div><div class="t" style="left:1262.6px;top:269.15px;font-size:14px;color:#161616;letter-spacing:-0.35px">Frequency</div><div class="t" style="left:1262.6px;top:287.15px;font-size:14px;color:#161616;letter-spacing:0.30px">µ': 99.96 MHz</div>
<div class="badge" style="left:1257.0px;top:309.0px;width:140.4px;height:53.0px;background:#c9c9cb"><div class="hd" style="height:18.6px;background:#5a5a5c"></div></div><div class="t" style="left:1262.6px;top:310.81px;font-size:14.4px;color:#f2f2f2">Meas 2</div><div class="abs" style="left:1370.2px;top:312.4px;width:21.0px;height:11.8px;background:#22cdd2;border-radius:5px;border:1px solid #1a6a70"></div><div class="t" style="left:1370.2px;top:313.54px;font-size:10px;color:#1c1c1c;font-weight:700;width:21.0px;text-align:center">2</div><div class="t" style="left:1262.6px;top:329.15px;font-size:14px;color:#161616;letter-spacing:-0.30px">Peak-to-Peak</div><div class="t" style="left:1262.6px;top:347.15px;font-size:14px;color:#161616;letter-spacing:0.28px">µ': 1.081 V</div>
<div class="badge" style="left:1257.0px;top:370.0px;width:140.4px;height:53.0px;background:#c9c9cb"><div class="hd" style="height:18.6px;background:#5a5a5c"></div></div><div class="t" style="left:1262.6px;top:371.81px;font-size:14.4px;color:#f2f2f2">Meas 3</div><div class="abs" style="left:1370.2px;top:373.4px;width:21.0px;height:11.8px;background:#f6ea2c;border-radius:5px;border:1px solid #5a5420"></div><div class="t" style="left:1370.2px;top:374.54px;font-size:10px;color:#1c1c1c;font-weight:700;width:21.0px;text-align:center">1</div><div class="t" style="left:1262.6px;top:390.15px;font-size:14px;color:#161616;letter-spacing:0.20px">Amplitude</div><div class="t" style="left:1262.6px;top:408.15px;font-size:14px;color:#161616;letter-spacing:0.28px">µ': 1.056 V</div>
<div class="badge" style="left:1257.0px;top:431.0px;width:140.4px;height:53.0px;background:#c9c9cb"><div class="hd" style="height:18.6px;background:#5a5a5c"></div></div><div class="t" style="left:1262.6px;top:432.81px;font-size:14.4px;color:#f2f2f2">Meas 4</div><div class="abs" style="left:1370.2px;top:434.4px;width:21.0px;height:11.8px;background:#22cdd2;border-radius:5px;border:1px solid #1a6a70"></div><div class="t" style="left:1370.2px;top:435.54px;font-size:10px;color:#1c1c1c;font-weight:700;width:21.0px;text-align:center">2</div><div class="t" style="left:1262.6px;top:451.15px;font-size:14px;color:#161616;letter-spacing:-0.30px">Period</div><div class="t" style="left:1262.6px;top:469.15px;font-size:14px;color:#161616;letter-spacing:0.20px">µ': 10.00 ns</div>
<div class="badge" style="left:1257.0px;top:491.0px;width:140.4px;height:53.0px;background:#c9c9cb"><div class="hd" style="height:18.6px;background:#5a5a5c"></div></div><div class="t" style="left:1262.6px;top:492.81px;font-size:14.4px;color:#f2f2f2">Meas 5</div><div class="abs" style="left:1370.2px;top:494.4px;width:21.0px;height:11.8px;background:#22cdd2;border-radius:5px;border:1px solid #1a6a70"></div><div class="t" style="left:1370.2px;top:495.54px;font-size:10px;color:#1c1c1c;font-weight:700;width:21.0px;text-align:center">2</div><div class="t" style="left:1262.6px;top:511.15px;font-size:14px;color:#161616;letter-spacing:-0.35px">Frequency</div><div class="t" style="left:1262.6px;top:529.15px;font-size:14px;color:#161616;letter-spacing:0.33px">µ': 100.0 MHz</div>
<svg class="abs" style="left:1244.3px;top:357px" width="8" height="20"><circle cx="4" cy="3.5" r="1.4" fill="#d8d8d8"/><circle cx="4" cy="9.5" r="1.4" fill="#d8d8d8"/><circle cx="4" cy="15.5" r="1.4" fill="#d8d8d8"/></svg>
<div class="badge" style="left:3.0px;top:713.0px;width:87.4px;height:70.6px;background:#c9c9cb"><div class="hd" style="height:19.0px;background:#fdee26"></div></div><div class="t" style="left:8.6px;top:713.64px;font-size:14.6px;color:#141404;letter-spacing:-0.50px">Ch 1</div><div class="t" style="left:8.8px;top:733.15px;font-size:14px;color:#161616;letter-spacing:0.15px">110 mV/div</div><div class="t" style="left:8.4px;top:751.15px;font-size:14px;color:#161616">50 Ω</div><div class="t" style="left:8.2px;top:769.15px;font-size:14px;color:#161616">4 GHz</div><div class="badge" style="left:95.4px;top:713.0px;width:87.6px;height:70.6px;background:#c9c9cb"><div class="hd" style="height:18.6px;background:#1f4d4b"></div></div><div class="t" style="left:101.0px;top:713.64px;font-size:14.6px;color:#2cd6be;letter-spacing:-0.50px">Ch 2</div><div class="t" style="left:101.2px;top:733.15px;font-size:14px;color:#161616;letter-spacing:0.15px">130 mV/div</div><div class="t" style="left:100.8px;top:751.15px;font-size:14px;color:#161616">50 Ω</div><div class="t" style="left:100.6px;top:769.15px;font-size:14px;color:#161616">4 GHz</div>
<div class="bbtn" style="left:467.2px"><i style="background:#f83c68"></i></div><div class="t" style="left:467.2px;top:741.07px;font-size:20px;color:#f0f0f0;width:38.6px;text-align:center">3</div><div class="bbtn" style="left:511.4px"><i style="background:#9cdc28"></i></div><div class="t" style="left:511.4px;top:741.07px;font-size:20px;color:#f0f0f0;width:38.6px;text-align:center">4</div><div class="bbtn" style="left:571.2px"><i style="background:#f48c1e"></i></div><div class="t" style="left:571.2px;top:744.73px;font-size:14.5px;color:#f0f0f0;width:38.6px;text-align:center">数学</div><div class="bbtn" style="left:615.0px"><i style="background:#d8d8d8"></i></div><div class="t" style="left:615.0px;top:744.73px;font-size:14.5px;color:#f0f0f0;width:38.6px;text-align:center">参考</div><div class="bbtn" style="left:658.8px"><i style="background:#c458ee"></i></div><div class="t" style="left:658.8px;top:744.73px;font-size:14.5px;color:#f0f0f0;width:38.6px;text-align:center">总线</div><div class="bbtn" style="left:718.2px"><i style="background:#5a5a5c"></i></div><div class="t" style="left:718.2px;top:743.73px;font-size:14.5px;color:#f0f0f0;width:38.6px;text-align:center">DVM</div>
<div class="vsep" style="left:561.0px;top:709px;height:74px"></div><div class="vsep" style="left:707.5px;top:709px;height:74px"></div><div class="vsep" style="left:767.5px;top:709px;height:74px"></div><div class="vsep" style="left:1294.3px;top:709px;height:74px"></div>
<div class="badge" style="left:778.0px;top:713.6px;width:193.2px;height:69.6px;background:#c9c9cb"><div class="hd" style="height:18.4px;background:#5a5a5c"></div></div><div class="t" style="left:783.6px;top:717.15px;font-size:14px;color:#f2f2f2">水平</div><div class="t" style="left:782.6px;top:733.15px;font-size:14px;color:#161616">4 ns/div</div><div class="t" style="left:885.0px;top:733.15px;font-size:14px;color:#161616">40 ns</div><div class="t" style="left:782.6px;top:751.15px;font-size:14px;color:#161616;letter-spacing:-0.62px">SR: 25 GS/s</div><div class="t" style="left:885.0px;top:751.15px;font-size:14px;color:#161616">40 ps/pt</div><div class="t" style="left:782.6px;top:769.15px;font-size:14px;color:#161616;letter-spacing:-0.20px">RL: 1 kpts</div><div class="t" style="left:899.4px;top:769.15px;font-size:14px;color:#161616">50%</div><svg class="abs" style="left:884.6px;top:769.6px" width="10" height="12" viewBox="0 0 10 12"><path d="M.7 .7h8.4v7.6l-4.2 2.8l-4.2-2.8z" fill="#1a1208" stroke="#f08a28" stroke-width="1.3"/></svg><div class="t" style="left:885.6px;top:771.05px;font-size:7.5px;color:#f4b078;font-weight:700;width:7.0px;text-align:center">T</div>
<div class="badge" style="left:977.5px;top:713.6px;width:154.0px;height:69.6px;background:#c9c9cb"><div class="hd" style="height:18.4px;background:#5a5a5c"></div></div><div class="t" style="left:983.2px;top:717.15px;font-size:14px;color:#f2f2f2">触发</div><div class="abs" style="left:981.6px;top:733.5px;width:29.0px;height:14.8px;background:#f8ec2a;border-radius:4px;border:1px solid #4a4618"></div><div class="t" style="left:981.6px;top:734.60px;font-size:13px;color:#141404;font-weight:700;width:29.0px;text-align:center">1</div><svg class="abs" style="left:1019.5px;top:734.5px" width="18" height="14" viewBox="0 0 18 14"><path d="M1.6 11.6h3.2q1 0 1.6-1l4.4-7.2q.6-1 1.6-1h4" fill="none" stroke="#5c5c5e" stroke-width="1.4"/></svg><div class="t" style="left:1046.0px;top:733.15px;font-size:14px;color:#161616">0 V</div>
<div class="badge" style="left:1138.0px;top:713.6px;width:145.0px;height:69.6px;background:#c9c9cb"><div class="hd" style="height:18.4px;background:#5a5a5c"></div></div><div class="t" style="left:1143.6px;top:717.15px;font-size:14px;color:#f2f2f2">采集</div><div class="t" style="left:1143.6px;top:735.15px;font-size:14px;color:#161616">自动 ，</div><div class="t" style="left:1222.4px;top:735.15px;font-size:14px;color:#161616">分析</div><div class="t" style="left:1143.6px;top:753.15px;font-size:14px;color:#161616">取样: 8 bits</div><div class="t" style="left:1143.6px;top:771.15px;font-size:14px;color:#161616">369 采集</div>
<div class="abs" style="left:1304.6px;top:707.8px;width:88.6px;height:36.0px;background:#14cc12;border-radius:4px"></div><div class="t" style="left:1304.6px;top:720.67px;font-size:12.2px;color:#f4fff0;font-weight:700;width:88.6px;text-align:center">已触发</div><div class="badge" style="left:1304.6px;top:748.4px;width:87.4px;height:34.8px;background:#c9c9cb"><div class="hd" style="height:0.0px;background:#5a5a5c"></div></div><div class="t" style="left:1304.6px;top:751.15px;font-size:14px;color:#161616;width:87.4px;text-align:center">07 Jan 2024</div><div class="t" style="left:1304.6px;top:767.15px;font-size:14px;color:#161616;letter-spacing:0.45px;width:87.4px;text-align:center">12:38:34 AM</div>
</div></body></html>
